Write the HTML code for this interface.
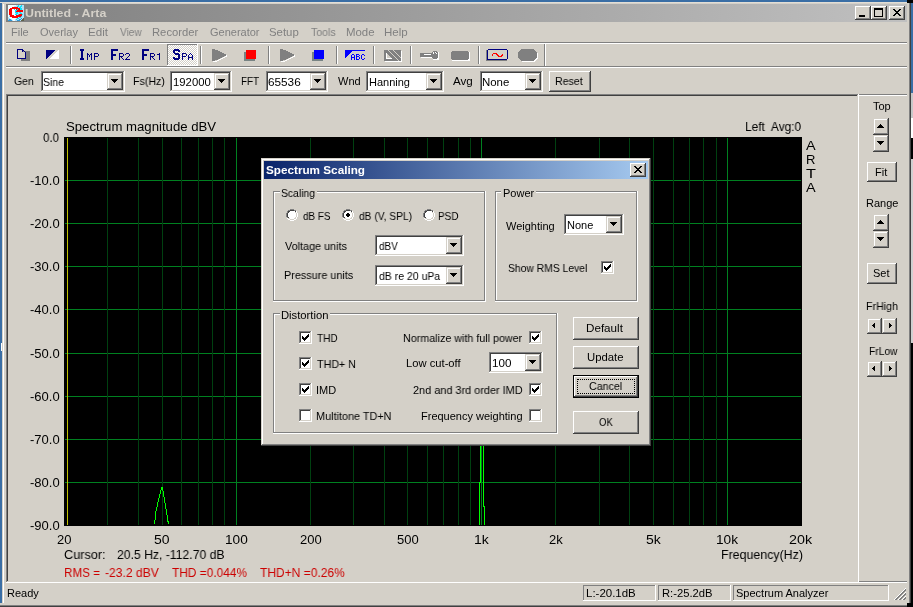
<!DOCTYPE html><html><head><meta charset="utf-8"><style>
html,body{margin:0;padding:0;width:913px;height:607px;overflow:hidden;background:#d4d0c8}
body>div,body>svg{position:absolute}
div{position:absolute}
.t{font-family:"Liberation Sans",sans-serif;font-size:11px;line-height:20px;white-space:pre;height:20px;will-change:transform}
</style></head><body>
<div style="left:0px;top:0px;width:913px;height:607px;background:#d4d0c8;"></div>
<div style="left:0px;top:0px;width:907px;height:2px;background:#3a6ea5;"></div>
<div style="left:907px;top:0px;width:6px;height:3px;background:#000;"></div>
<div style="left:0px;top:3px;width:2px;height:600px;background:#3a6ea5;"></div>
<div style="left:0px;top:2px;width:907px;height:1px;background:#e2ded6;"></div>
<div style="left:2px;top:3px;width:1px;height:600px;background:#d4d0c8;"></div>
<div style="left:1px;top:343px;width:1px;height:8px;background:#ffffff;"></div>
<div style="left:3px;top:3px;width:1px;height:600px;background:#ffffff;"></div>
<div style="left:3px;top:3px;width:905px;height:1px;background:#d4d0c8;"></div>
<div style="left:911px;top:3px;width:2px;height:90px;background:#3a6ea5;"></div>
<div style="left:911px;top:93px;width:2px;height:25px;background:#c8c8c8;"></div>
<div style="left:911px;top:118px;width:2px;height:20px;background:#ffffff;"></div>
<div style="left:911px;top:138px;width:2px;height:21px;background:#000;"></div>
<div style="left:911px;top:159px;width:2px;height:184px;background:#d0d0d0;"></div>
<div style="left:911px;top:343px;width:2px;height:264px;background:#000;"></div>
<div style="left:909px;top:3px;width:1px;height:602px;background:#808080;"></div>
<div style="left:910px;top:3px;width:1px;height:604px;background:#404040;"></div>
<div style="left:0px;top:605px;width:910px;height:1px;background:#808080;"></div>
<div style="left:0px;top:606px;width:911px;height:1px;background:#404040;"></div>
<div style="left:6px;top:4px;width:901px;height:18px;background:linear-gradient(to right,#808080,#c0c0c0);"></div>
<div class="t" style="left:24.88px;top:3px;font-size:11px;color:#d4d0c8;transform:scaleX(1.1250);transform-origin:0 0;font-weight:bold;">Untitled - Arta</div>
<div style="left:855px;top:6px;width:16px;height:14px;background:#404040;"></div>
<div style="left:855px;top:6px;width:15px;height:13px;background:#ffffff;"></div>
<div style="left:856px;top:7px;width:14px;height:12px;background:#808080;"></div>
<div style="left:856px;top:7px;width:13px;height:11px;background:#d4d0c8;"></div>
<div style="left:857px;top:8px;width:12px;height:10px;background:#d4d0c8;"></div>
<div style="left:871px;top:6px;width:16px;height:14px;background:#404040;"></div>
<div style="left:871px;top:6px;width:15px;height:13px;background:#ffffff;"></div>
<div style="left:872px;top:7px;width:14px;height:12px;background:#808080;"></div>
<div style="left:872px;top:7px;width:13px;height:11px;background:#d4d0c8;"></div>
<div style="left:873px;top:8px;width:12px;height:10px;background:#d4d0c8;"></div>
<div style="left:889px;top:6px;width:16px;height:14px;background:#404040;"></div>
<div style="left:889px;top:6px;width:15px;height:13px;background:#ffffff;"></div>
<div style="left:890px;top:7px;width:14px;height:12px;background:#808080;"></div>
<div style="left:890px;top:7px;width:13px;height:11px;background:#d4d0c8;"></div>
<div style="left:891px;top:8px;width:12px;height:10px;background:#d4d0c8;"></div>
<div style="left:859px;top:15px;width:6px;height:2px;background:#000;"></div>
<div style="left:874px;top:8px;width:9px;height:9px;background:#000;"></div>
<div style="left:875px;top:10px;width:7px;height:6px;background:#d4d0c8;"></div>
<svg style="position:absolute;left:893px;top:9px" width="9" height="8" shape-rendering="crispEdges"><path d="M0 0h2v1h-2zM6 0h2v1h-2zM1 1h2v1h-2zM5 1h2v1h-2zM2 2h4v1h-4zM3 3h2v1h-2zM2 4h4v1h-4zM1 5h2v1h-2zM5 5h2v1h-2zM0 6h2v1h-2zM6 6h2v1h-2z" fill="#000"/></svg>
<svg style="position:absolute;left:8px;top:5px" width="16" height="16" shape-rendering="crispEdges"><rect x="0" y="0" width="1" height="1" fill="#f4fcff"/><rect x="1" y="0" width="1" height="1" fill="#f4fcff"/><rect x="2" y="0" width="1" height="1" fill="#f4fcff"/><rect x="3" y="0" width="1" height="1" fill="#f4fcff"/><rect x="4" y="0" width="1" height="1" fill="#f4fcff"/><rect x="5" y="0" width="1" height="1" fill="#f4fcff"/><rect x="6" y="0" width="1" height="1" fill="#f4fcff"/><rect x="7" y="0" width="1" height="1" fill="#f4fcff"/><rect x="8" y="0" width="1" height="1" fill="#b0e0f8"/><rect x="9" y="0" width="1" height="1" fill="#b0e0f8"/><rect x="10" y="0" width="1" height="1" fill="#10e0f8"/><rect x="11" y="0" width="1" height="1" fill="#b0e0f8"/><rect x="12" y="0" width="1" height="1" fill="#b0e0f8"/><rect x="13" y="0" width="1" height="1" fill="#10e0f8"/><rect x="14" y="0" width="1" height="1" fill="#b0e0f8"/><rect x="15" y="0" width="1" height="1" fill="#b0e0f8"/><rect x="0" y="1" width="1" height="1" fill="#f4fcff"/><rect x="1" y="1" width="1" height="1" fill="#f4fcff"/><rect x="2" y="1" width="1" height="1" fill="#f4fcff"/><rect x="3" y="1" width="1" height="1" fill="#f4fcff"/><rect x="4" y="1" width="1" height="1" fill="#f4fcff"/><rect x="5" y="1" width="1" height="1" fill="#f4fcff"/><rect x="6" y="1" width="1" height="1" fill="#b0e0f8"/><rect x="7" y="1" width="1" height="1" fill="#b0e0f8"/><rect x="8" y="1" width="1" height="1" fill="#b0e0f8"/><rect x="9" y="1" width="1" height="1" fill="#10e0f8"/><rect x="10" y="1" width="1" height="1" fill="#10e0f8"/><rect x="11" y="1" width="1" height="1" fill="#b0e0f8"/><rect x="12" y="1" width="1" height="1" fill="#10e0f8"/><rect x="13" y="1" width="1" height="1" fill="#10e0f8"/><rect x="14" y="1" width="1" height="1" fill="#b0e0f8"/><rect x="15" y="1" width="1" height="1" fill="#b0e0f8"/><rect x="0" y="2" width="1" height="1" fill="#f4fcff"/><rect x="1" y="2" width="1" height="1" fill="#f4fcff"/><rect x="2" y="2" width="1" height="1" fill="#f4fcff"/><rect x="3" y="2" width="1" height="1" fill="#f4fcff"/><rect x="4" y="2" width="1" height="1" fill="#ff0000"/><rect x="5" y="2" width="1" height="1" fill="#ff0000"/><rect x="6" y="2" width="1" height="1" fill="#ff0000"/><rect x="7" y="2" width="1" height="1" fill="#ff0000"/><rect x="8" y="2" width="1" height="1" fill="#ff0000"/><rect x="9" y="2" width="1" height="1" fill="#ff0000"/><rect x="10" y="2" width="1" height="1" fill="#b0e0f8"/><rect x="11" y="2" width="1" height="1" fill="#10e0f8"/><rect x="12" y="2" width="1" height="1" fill="#10e0f8"/><rect x="13" y="2" width="1" height="1" fill="#b0e0f8"/><rect x="14" y="2" width="1" height="1" fill="#b0e0f8"/><rect x="15" y="2" width="1" height="1" fill="#b0e0f8"/><rect x="0" y="3" width="1" height="1" fill="#f4fcff"/><rect x="1" y="3" width="1" height="1" fill="#f4fcff"/><rect x="2" y="3" width="1" height="1" fill="#ff0000"/><rect x="3" y="3" width="1" height="1" fill="#ff0000"/><rect x="4" y="3" width="1" height="1" fill="#ff0000"/><rect x="5" y="3" width="1" height="1" fill="#ff0000"/><rect x="6" y="3" width="1" height="1" fill="#ff0000"/><rect x="7" y="3" width="1" height="1" fill="#ff0000"/><rect x="8" y="3" width="1" height="1" fill="#ff0000"/><rect x="9" y="3" width="1" height="1" fill="#ff0000"/><rect x="10" y="3" width="1" height="1" fill="#ff0000"/><rect x="11" y="3" width="1" height="1" fill="#ff0000"/><rect x="12" y="3" width="1" height="1" fill="#10e0f8"/><rect x="13" y="3" width="1" height="1" fill="#10e0f8"/><rect x="14" y="3" width="1" height="1" fill="#b0e0f8"/><rect x="15" y="3" width="1" height="1" fill="#b0e0f8"/><rect x="0" y="4" width="1" height="1" fill="#f4fcff"/><rect x="1" y="4" width="1" height="1" fill="#ff0000"/><rect x="2" y="4" width="1" height="1" fill="#ff0000"/><rect x="3" y="4" width="1" height="1" fill="#ff0000"/><rect x="4" y="4" width="1" height="1" fill="#f4fcff"/><rect x="5" y="4" width="1" height="1" fill="#f4fcff"/><rect x="6" y="4" width="1" height="1" fill="#10e0f8"/><rect x="7" y="4" width="1" height="1" fill="#f4fcff"/><rect x="8" y="4" width="1" height="1" fill="#ff0000"/><rect x="9" y="4" width="1" height="1" fill="#10e0f8"/><rect x="10" y="4" width="1" height="1" fill="#ff0000"/><rect x="11" y="4" width="1" height="1" fill="#ff0000"/><rect x="12" y="4" width="1" height="1" fill="#10e0f8"/><rect x="13" y="4" width="1" height="1" fill="#10e0f8"/><rect x="14" y="4" width="1" height="1" fill="#b0e0f8"/><rect x="15" y="4" width="1" height="1" fill="#b0e0f8"/><rect x="0" y="5" width="1" height="1" fill="#f4fcff"/><rect x="1" y="5" width="1" height="1" fill="#ff0000"/><rect x="2" y="5" width="1" height="1" fill="#ff0000"/><rect x="3" y="5" width="1" height="1" fill="#ff0000"/><rect x="4" y="5" width="1" height="1" fill="#f4fcff"/><rect x="5" y="5" width="1" height="1" fill="#f4fcff"/><rect x="6" y="5" width="1" height="1" fill="#f4fcff"/><rect x="7" y="5" width="1" height="1" fill="#10e0f8"/><rect x="8" y="5" width="1" height="1" fill="#10e0f8"/><rect x="9" y="5" width="1" height="1" fill="#ff0000"/><rect x="10" y="5" width="1" height="1" fill="#ff0000"/><rect x="11" y="5" width="1" height="1" fill="#ff0000"/><rect x="12" y="5" width="1" height="1" fill="#ff0000"/><rect x="13" y="5" width="1" height="1" fill="#ff0000"/><rect x="14" y="5" width="1" height="1" fill="#ff0000"/><rect x="15" y="5" width="1" height="1" fill="#b0e0f8"/><rect x="0" y="6" width="1" height="1" fill="#f4fcff"/><rect x="1" y="6" width="1" height="1" fill="#ff0000"/><rect x="2" y="6" width="1" height="1" fill="#ff0000"/><rect x="3" y="6" width="1" height="1" fill="#ff0000"/><rect x="4" y="6" width="1" height="1" fill="#f4fcff"/><rect x="5" y="6" width="1" height="1" fill="#f4fcff"/><rect x="6" y="6" width="1" height="1" fill="#f4fcff"/><rect x="7" y="6" width="1" height="1" fill="#10e0f8"/><rect x="8" y="6" width="1" height="1" fill="#ff0000"/><rect x="9" y="6" width="1" height="1" fill="#ff0000"/><rect x="10" y="6" width="1" height="1" fill="#ff0000"/><rect x="11" y="6" width="1" height="1" fill="#ff0000"/><rect x="12" y="6" width="1" height="1" fill="#ff0000"/><rect x="13" y="6" width="1" height="1" fill="#ff0000"/><rect x="14" y="6" width="1" height="1" fill="#ff0000"/><rect x="15" y="6" width="1" height="1" fill="#b0e0f8"/><rect x="0" y="7" width="1" height="1" fill="#f4fcff"/><rect x="1" y="7" width="1" height="1" fill="#ff0000"/><rect x="2" y="7" width="1" height="1" fill="#ff0000"/><rect x="3" y="7" width="1" height="1" fill="#ff0000"/><rect x="4" y="7" width="1" height="1" fill="#f4fcff"/><rect x="5" y="7" width="1" height="1" fill="#f4fcff"/><rect x="6" y="7" width="1" height="1" fill="#f4fcff"/><rect x="7" y="7" width="1" height="1" fill="#10e0f8"/><rect x="8" y="7" width="1" height="1" fill="#10e0f8"/><rect x="9" y="7" width="1" height="1" fill="#10e0f8"/><rect x="10" y="7" width="1" height="1" fill="#b0e0f8"/><rect x="11" y="7" width="1" height="1" fill="#10e0f8"/><rect x="12" y="7" width="1" height="1" fill="#10e0f8"/><rect x="13" y="7" width="1" height="1" fill="#b0e0f8"/><rect x="14" y="7" width="1" height="1" fill="#b0e0f8"/><rect x="15" y="7" width="1" height="1" fill="#b0e0f8"/><rect x="0" y="8" width="1" height="1" fill="#f4fcff"/><rect x="1" y="8" width="1" height="1" fill="#ff0000"/><rect x="2" y="8" width="1" height="1" fill="#ff0000"/><rect x="3" y="8" width="1" height="1" fill="#ff0000"/><rect x="4" y="8" width="1" height="1" fill="#f4fcff"/><rect x="5" y="8" width="1" height="1" fill="#f4fcff"/><rect x="6" y="8" width="1" height="1" fill="#f4fcff"/><rect x="7" y="8" width="1" height="1" fill="#b0e0f8"/><rect x="8" y="8" width="1" height="1" fill="#10e0f8"/><rect x="9" y="8" width="1" height="1" fill="#10e0f8"/><rect x="10" y="8" width="1" height="1" fill="#b0e0f8"/><rect x="11" y="8" width="1" height="1" fill="#b0e0f8"/><rect x="12" y="8" width="1" height="1" fill="#10e0f8"/><rect x="13" y="8" width="1" height="1" fill="#10e0f8"/><rect x="14" y="8" width="1" height="1" fill="#b0e0f8"/><rect x="15" y="8" width="1" height="1" fill="#b0e0f8"/><rect x="0" y="9" width="1" height="1" fill="#f4fcff"/><rect x="1" y="9" width="1" height="1" fill="#ff0000"/><rect x="2" y="9" width="1" height="1" fill="#ff0000"/><rect x="3" y="9" width="1" height="1" fill="#ff0000"/><rect x="4" y="9" width="1" height="1" fill="#f4fcff"/><rect x="5" y="9" width="1" height="1" fill="#f4fcff"/><rect x="6" y="9" width="1" height="1" fill="#f4fcff"/><rect x="7" y="9" width="1" height="1" fill="#10e0f8"/><rect x="8" y="9" width="1" height="1" fill="#10e0f8"/><rect x="9" y="9" width="1" height="1" fill="#b0e0f8"/><rect x="10" y="9" width="1" height="1" fill="#10e0f8"/><rect x="11" y="9" width="1" height="1" fill="#ff0000"/><rect x="12" y="9" width="1" height="1" fill="#ff0000"/><rect x="13" y="9" width="1" height="1" fill="#ff0000"/><rect x="14" y="9" width="1" height="1" fill="#10e0f8"/><rect x="15" y="9" width="1" height="1" fill="#b0e0f8"/><rect x="0" y="10" width="1" height="1" fill="#f4fcff"/><rect x="1" y="10" width="1" height="1" fill="#b0e0f8"/><rect x="2" y="10" width="1" height="1" fill="#ff0000"/><rect x="3" y="10" width="1" height="1" fill="#ff0000"/><rect x="4" y="10" width="1" height="1" fill="#ff0000"/><rect x="5" y="10" width="1" height="1" fill="#ff0000"/><rect x="6" y="10" width="1" height="1" fill="#f4fcff"/><rect x="7" y="10" width="1" height="1" fill="#f4fcff"/><rect x="8" y="10" width="1" height="1" fill="#ff0000"/><rect x="9" y="10" width="1" height="1" fill="#ff0000"/><rect x="10" y="10" width="1" height="1" fill="#ff0000"/><rect x="11" y="10" width="1" height="1" fill="#ff0000"/><rect x="12" y="10" width="1" height="1" fill="#ff0000"/><rect x="13" y="10" width="1" height="1" fill="#ff0000"/><rect x="14" y="10" width="1" height="1" fill="#b0e0f8"/><rect x="15" y="10" width="1" height="1" fill="#b0e0f8"/><rect x="0" y="11" width="1" height="1" fill="#f4fcff"/><rect x="1" y="11" width="1" height="1" fill="#b0e0f8"/><rect x="2" y="11" width="1" height="1" fill="#ff0000"/><rect x="3" y="11" width="1" height="1" fill="#ff0000"/><rect x="4" y="11" width="1" height="1" fill="#ff0000"/><rect x="5" y="11" width="1" height="1" fill="#ff0000"/><rect x="6" y="11" width="1" height="1" fill="#ff0000"/><rect x="7" y="11" width="1" height="1" fill="#ff0000"/><rect x="8" y="11" width="1" height="1" fill="#ff0000"/><rect x="9" y="11" width="1" height="1" fill="#ff0000"/><rect x="10" y="11" width="1" height="1" fill="#ff0000"/><rect x="11" y="11" width="1" height="1" fill="#ff0000"/><rect x="12" y="11" width="1" height="1" fill="#ff0000"/><rect x="13" y="11" width="1" height="1" fill="#10e0f8"/><rect x="14" y="11" width="1" height="1" fill="#b0e0f8"/><rect x="15" y="11" width="1" height="1" fill="#b0e0f8"/><rect x="0" y="12" width="1" height="1" fill="#b0e0f8"/><rect x="1" y="12" width="1" height="1" fill="#f4fcff"/><rect x="2" y="12" width="1" height="1" fill="#f4fcff"/><rect x="3" y="12" width="1" height="1" fill="#f4fcff"/><rect x="4" y="12" width="1" height="1" fill="#ff0000"/><rect x="5" y="12" width="1" height="1" fill="#ff0000"/><rect x="6" y="12" width="1" height="1" fill="#ff0000"/><rect x="7" y="12" width="1" height="1" fill="#ff0000"/><rect x="8" y="12" width="1" height="1" fill="#ff0000"/><rect x="9" y="12" width="1" height="1" fill="#ff0000"/><rect x="10" y="12" width="1" height="1" fill="#b0e0f8"/><rect x="11" y="12" width="1" height="1" fill="#10e0f8"/><rect x="12" y="12" width="1" height="1" fill="#10e0f8"/><rect x="13" y="12" width="1" height="1" fill="#b0e0f8"/><rect x="14" y="12" width="1" height="1" fill="#b0e0f8"/><rect x="15" y="12" width="1" height="1" fill="#b0e0f8"/><rect x="0" y="13" width="1" height="1" fill="#b0e0f8"/><rect x="1" y="13" width="1" height="1" fill="#b0e0f8"/><rect x="2" y="13" width="1" height="1" fill="#f4fcff"/><rect x="3" y="13" width="1" height="1" fill="#f4fcff"/><rect x="4" y="13" width="1" height="1" fill="#f4fcff"/><rect x="5" y="13" width="1" height="1" fill="#f4fcff"/><rect x="6" y="13" width="1" height="1" fill="#f4fcff"/><rect x="7" y="13" width="1" height="1" fill="#f4fcff"/><rect x="8" y="13" width="1" height="1" fill="#b0e0f8"/><rect x="9" y="13" width="1" height="1" fill="#10e0f8"/><rect x="10" y="13" width="1" height="1" fill="#10e0f8"/><rect x="11" y="13" width="1" height="1" fill="#b0e0f8"/><rect x="12" y="13" width="1" height="1" fill="#b0e0f8"/><rect x="13" y="13" width="1" height="1" fill="#3098d8"/><rect x="14" y="13" width="1" height="1" fill="#b0e0f8"/><rect x="15" y="13" width="1" height="1" fill="#606048"/><rect x="0" y="14" width="1" height="1" fill="#b0e0f8"/><rect x="1" y="14" width="1" height="1" fill="#3098d8"/><rect x="2" y="14" width="1" height="1" fill="#3098d8"/><rect x="3" y="14" width="1" height="1" fill="#b0e0f8"/><rect x="4" y="14" width="1" height="1" fill="#f4fcff"/><rect x="5" y="14" width="1" height="1" fill="#f4fcff"/><rect x="6" y="14" width="1" height="1" fill="#f4fcff"/><rect x="7" y="14" width="1" height="1" fill="#b0e0f8"/><rect x="8" y="14" width="1" height="1" fill="#10e0f8"/><rect x="9" y="14" width="1" height="1" fill="#b0e0f8"/><rect x="10" y="14" width="1" height="1" fill="#b0e0f8"/><rect x="11" y="14" width="1" height="1" fill="#3098d8"/><rect x="12" y="14" width="1" height="1" fill="#3098d8"/><rect x="13" y="14" width="1" height="1" fill="#b0e0f8"/><rect x="14" y="14" width="1" height="1" fill="#606048"/><rect x="15" y="14" width="1" height="1" fill="#606048"/><rect x="0" y="15" width="1" height="1" fill="#3098d8"/><rect x="1" y="15" width="1" height="1" fill="#3098d8"/><rect x="2" y="15" width="1" height="1" fill="#3098d8"/><rect x="3" y="15" width="1" height="1" fill="#3098d8"/><rect x="4" y="15" width="1" height="1" fill="#b0e0f8"/><rect x="5" y="15" width="1" height="1" fill="#f4fcff"/><rect x="6" y="15" width="1" height="1" fill="#f4fcff"/><rect x="7" y="15" width="1" height="1" fill="#b0e0f8"/><rect x="8" y="15" width="1" height="1" fill="#b0e0f8"/><rect x="9" y="15" width="1" height="1" fill="#3098d8"/><rect x="10" y="15" width="1" height="1" fill="#3098d8"/><rect x="11" y="15" width="1" height="1" fill="#3098d8"/><rect x="12" y="15" width="1" height="1" fill="#b0e0f8"/><rect x="13" y="15" width="1" height="1" fill="#606048"/><rect x="14" y="15" width="1" height="1" fill="#606048"/><rect x="15" y="15" width="1" height="1" fill="#606048"/></svg>
<div class="t" style="left:11.00px;top:22px;font-size:11px;color:#808080;transform:scaleX(1.0000);transform-origin:0 0;">File</div>
<div class="t" style="left:40.00px;top:22px;font-size:11px;color:#808080;transform:scaleX(1.0000);transform-origin:0 0;">Overlay</div>
<div class="t" style="left:87.94px;top:22px;font-size:11px;color:#808080;transform:scaleX(1.0556);transform-origin:0 0;">Edit</div>
<div class="t" style="left:120.00px;top:22px;font-size:11px;color:#808080;transform:scaleX(0.9167);transform-origin:0 0;">View</div>
<div class="t" style="left:151.98px;top:22px;font-size:11px;color:#808080;transform:scaleX(1.0227);transform-origin:0 0;">Recorder</div>
<div class="t" style="left:210.00px;top:22px;font-size:11px;color:#808080;transform:scaleX(1.0000);transform-origin:0 0;">Generator</div>
<div class="t" style="left:268.96px;top:22px;font-size:11px;color:#808080;transform:scaleX(1.0357);transform-origin:0 0;">Setup</div>
<div class="t" style="left:311.00px;top:22px;font-size:11px;color:#808080;transform:scaleX(0.9615);transform-origin:0 0;">Tools</div>
<div class="t" style="left:345.96px;top:22px;font-size:11px;color:#808080;transform:scaleX(1.0385);transform-origin:0 0;">Mode</div>
<div class="t" style="left:383.95px;top:22px;font-size:11px;color:#808080;transform:scaleX(1.0476);transform-origin:0 0;">Help</div>
<div style="left:6px;top:42px;width:901px;height:1px;background:#808080;"></div>
<div style="left:6px;top:43px;width:901px;height:1px;background:#ffffff;"></div>
<div style="left:6px;top:66px;width:901px;height:1px;background:#808080;"></div>
<div style="left:6px;top:67px;width:901px;height:1px;background:#ffffff;"></div>
<div style="left:70px;top:46px;width:1px;height:18px;background:#808080;"></div>
<div style="left:71px;top:46px;width:1px;height:18px;background:#ffffff;"></div>
<div style="left:200px;top:46px;width:1px;height:18px;background:#808080;"></div>
<div style="left:201px;top:46px;width:1px;height:18px;background:#ffffff;"></div>
<div style="left:268px;top:46px;width:1px;height:18px;background:#808080;"></div>
<div style="left:269px;top:46px;width:1px;height:18px;background:#ffffff;"></div>
<div style="left:336px;top:46px;width:1px;height:18px;background:#808080;"></div>
<div style="left:337px;top:46px;width:1px;height:18px;background:#ffffff;"></div>
<div style="left:373px;top:46px;width:1px;height:18px;background:#808080;"></div>
<div style="left:374px;top:46px;width:1px;height:18px;background:#ffffff;"></div>
<div style="left:410px;top:46px;width:1px;height:18px;background:#808080;"></div>
<div style="left:411px;top:46px;width:1px;height:18px;background:#ffffff;"></div>
<div style="left:478px;top:46px;width:1px;height:18px;background:#808080;"></div>
<div style="left:479px;top:46px;width:1px;height:18px;background:#ffffff;"></div>
<div style="left:544px;top:44px;width:1px;height:22px;background:#808080;"></div>
<div style="left:545px;top:44px;width:1px;height:22px;background:#ffffff;"></div>
<svg style="position:absolute;left:0;top:0" width="913" height="100" shape-rendering="crispEdges"><rect x="21" y="51" width="9" height="10" fill="#808080"/><rect x="17" y="49" width="6" height="1" fill="#000080"/><rect x="17" y="50" width="1" height="1" fill="#000080"/><rect x="22" y="50" width="2" height="1" fill="#000080"/><rect x="17" y="51" width="1" height="1" fill="#000080"/><rect x="22" y="51" width="1" height="1" fill="#000080"/><rect x="24" y="51" width="1" height="1" fill="#000080"/><rect x="17" y="52" width="1" height="1" fill="#000080"/><rect x="23" y="52" width="3" height="1" fill="#000080"/><rect x="17" y="53" width="1" height="1" fill="#000080"/><rect x="25" y="53" width="1" height="1" fill="#000080"/><rect x="17" y="54" width="1" height="1" fill="#000080"/><rect x="25" y="54" width="1" height="1" fill="#000080"/><rect x="17" y="55" width="1" height="1" fill="#000080"/><rect x="25" y="55" width="1" height="1" fill="#000080"/><rect x="17" y="56" width="1" height="1" fill="#000080"/><rect x="25" y="56" width="1" height="1" fill="#000080"/><rect x="17" y="57" width="1" height="1" fill="#000080"/><rect x="25" y="57" width="1" height="1" fill="#000080"/><rect x="17" y="58" width="9" height="1" fill="#000080"/><rect x="18" y="50" width="4" height="8" fill="#d4d0c8"/><rect x="22" y="52" width="3" height="6" fill="#d4d0c8"/><rect x="46" y="50" width="9" height="1" fill="#000080"/><rect x="58" y="50" width="1" height="1" fill="#ffffff"/><rect x="46" y="51" width="8" height="1" fill="#000080"/><rect x="57" y="51" width="2" height="1" fill="#ffffff"/><rect x="46" y="52" width="7" height="1" fill="#000080"/><rect x="56" y="52" width="3" height="1" fill="#ffffff"/><rect x="46" y="53" width="6" height="1" fill="#000080"/><rect x="55" y="53" width="4" height="1" fill="#ffffff"/><rect x="46" y="54" width="5" height="1" fill="#000080"/><rect x="54" y="54" width="5" height="1" fill="#ffffff"/><rect x="46" y="55" width="4" height="1" fill="#000080"/><rect x="53" y="55" width="6" height="1" fill="#ffffff"/><rect x="46" y="56" width="3" height="1" fill="#000080"/><rect x="52" y="56" width="7" height="1" fill="#ffffff"/><rect x="46" y="57" width="2" height="1" fill="#000080"/><rect x="51" y="57" width="8" height="1" fill="#ffffff"/><rect x="46" y="58" width="1" height="1" fill="#000080"/><rect x="50" y="58" width="9" height="1" fill="#ffffff"/><rect x="167" y="44" width="31" height="22" fill="#ffffff"/><rect x="167" y="44" width="30" height="21" fill="#808080"/><pattern id="dith" width="2" height="2" patternUnits="userSpaceOnUse"><rect width="2" height="2" fill="#d4d0c8"/><rect width="1" height="1" fill="#fff"/><rect x="1" y="1" width="1" height="1" fill="#fff"/></pattern><rect x="168" y="45" width="29" height="20" fill="url(#dith)"/><rect x="80" y="49" width="4" height="1" fill="#000080"/><rect x="80" y="50" width="4" height="1" fill="#000080"/><rect x="81" y="51" width="2" height="1" fill="#000080"/><rect x="81" y="52" width="2" height="1" fill="#000080"/><rect x="81" y="53" width="2" height="1" fill="#000080"/><rect x="81" y="54" width="2" height="1" fill="#000080"/><rect x="81" y="55" width="2" height="1" fill="#000080"/><rect x="81" y="56" width="2" height="1" fill="#000080"/><rect x="81" y="57" width="2" height="1" fill="#000080"/><rect x="80" y="58" width="4" height="1" fill="#000080"/><rect x="80" y="59" width="4" height="1" fill="#000080"/><rect x="87" y="53" width="1" height="1" fill="#000080"/><rect x="91" y="53" width="1" height="1" fill="#000080"/><rect x="87" y="54" width="2" height="1" fill="#000080"/><rect x="90" y="54" width="2" height="1" fill="#000080"/><rect x="87" y="55" width="1" height="1" fill="#000080"/><rect x="89" y="55" width="1" height="1" fill="#000080"/><rect x="91" y="55" width="1" height="1" fill="#000080"/><rect x="87" y="56" width="1" height="1" fill="#000080"/><rect x="89" y="56" width="1" height="1" fill="#000080"/><rect x="91" y="56" width="1" height="1" fill="#000080"/><rect x="87" y="57" width="1" height="1" fill="#000080"/><rect x="91" y="57" width="1" height="1" fill="#000080"/><rect x="87" y="58" width="1" height="1" fill="#000080"/><rect x="91" y="58" width="1" height="1" fill="#000080"/><rect x="87" y="59" width="1" height="1" fill="#000080"/><rect x="91" y="59" width="1" height="1" fill="#000080"/><rect x="94" y="53" width="4" height="1" fill="#000080"/><rect x="94" y="54" width="1" height="1" fill="#000080"/><rect x="98" y="54" width="1" height="1" fill="#000080"/><rect x="94" y="55" width="1" height="1" fill="#000080"/><rect x="98" y="55" width="1" height="1" fill="#000080"/><rect x="94" y="56" width="4" height="1" fill="#000080"/><rect x="94" y="57" width="1" height="1" fill="#000080"/><rect x="94" y="58" width="1" height="1" fill="#000080"/><rect x="94" y="59" width="1" height="1" fill="#000080"/><rect x="111" y="49" width="7" height="1" fill="#000080"/><rect x="111" y="50" width="7" height="1" fill="#000080"/><rect x="111" y="51" width="2" height="1" fill="#000080"/><rect x="111" y="52" width="2" height="1" fill="#000080"/><rect x="111" y="53" width="2" height="1" fill="#000080"/><rect x="111" y="54" width="5" height="1" fill="#000080"/><rect x="111" y="55" width="5" height="1" fill="#000080"/><rect x="111" y="56" width="2" height="1" fill="#000080"/><rect x="111" y="57" width="2" height="1" fill="#000080"/><rect x="111" y="58" width="2" height="1" fill="#000080"/><rect x="111" y="59" width="2" height="1" fill="#000080"/><rect x="119" y="53" width="4" height="1" fill="#000080"/><rect x="119" y="54" width="1" height="1" fill="#000080"/><rect x="123" y="54" width="1" height="1" fill="#000080"/><rect x="119" y="55" width="1" height="1" fill="#000080"/><rect x="123" y="55" width="1" height="1" fill="#000080"/><rect x="119" y="56" width="4" height="1" fill="#000080"/><rect x="119" y="57" width="1" height="1" fill="#000080"/><rect x="121" y="57" width="1" height="1" fill="#000080"/><rect x="119" y="58" width="1" height="1" fill="#000080"/><rect x="122" y="58" width="1" height="1" fill="#000080"/><rect x="119" y="59" width="1" height="1" fill="#000080"/><rect x="123" y="59" width="1" height="1" fill="#000080"/><rect x="126" y="53" width="3" height="1" fill="#000080"/><rect x="125" y="54" width="1" height="1" fill="#000080"/><rect x="129" y="54" width="1" height="1" fill="#000080"/><rect x="129" y="55" width="1" height="1" fill="#000080"/><rect x="128" y="56" width="1" height="1" fill="#000080"/><rect x="127" y="57" width="1" height="1" fill="#000080"/><rect x="126" y="58" width="1" height="1" fill="#000080"/><rect x="125" y="59" width="5" height="1" fill="#000080"/><rect x="142" y="49" width="7" height="1" fill="#000080"/><rect x="142" y="50" width="7" height="1" fill="#000080"/><rect x="142" y="51" width="2" height="1" fill="#000080"/><rect x="142" y="52" width="2" height="1" fill="#000080"/><rect x="142" y="53" width="2" height="1" fill="#000080"/><rect x="142" y="54" width="5" height="1" fill="#000080"/><rect x="142" y="55" width="5" height="1" fill="#000080"/><rect x="142" y="56" width="2" height="1" fill="#000080"/><rect x="142" y="57" width="2" height="1" fill="#000080"/><rect x="142" y="58" width="2" height="1" fill="#000080"/><rect x="142" y="59" width="2" height="1" fill="#000080"/><rect x="150" y="53" width="4" height="1" fill="#000080"/><rect x="150" y="54" width="1" height="1" fill="#000080"/><rect x="154" y="54" width="1" height="1" fill="#000080"/><rect x="150" y="55" width="1" height="1" fill="#000080"/><rect x="154" y="55" width="1" height="1" fill="#000080"/><rect x="150" y="56" width="4" height="1" fill="#000080"/><rect x="150" y="57" width="1" height="1" fill="#000080"/><rect x="152" y="57" width="1" height="1" fill="#000080"/><rect x="150" y="58" width="1" height="1" fill="#000080"/><rect x="153" y="58" width="1" height="1" fill="#000080"/><rect x="150" y="59" width="1" height="1" fill="#000080"/><rect x="154" y="59" width="1" height="1" fill="#000080"/><rect x="159" y="53" width="1" height="1" fill="#000080"/><rect x="157" y="54" width="3" height="1" fill="#000080"/><rect x="159" y="55" width="1" height="1" fill="#000080"/><rect x="159" y="56" width="1" height="1" fill="#000080"/><rect x="159" y="57" width="1" height="1" fill="#000080"/><rect x="159" y="58" width="1" height="1" fill="#000080"/><rect x="159" y="59" width="1" height="1" fill="#000080"/><rect x="174" y="49" width="5" height="1" fill="#000080"/><rect x="173" y="50" width="7" height="1" fill="#000080"/><rect x="173" y="51" width="2" height="1" fill="#000080"/><rect x="178" y="51" width="2" height="1" fill="#000080"/><rect x="173" y="52" width="2" height="1" fill="#000080"/><rect x="174" y="53" width="5" height="1" fill="#000080"/><rect x="175" y="54" width="5" height="1" fill="#000080"/><rect x="178" y="55" width="2" height="1" fill="#000080"/><rect x="178" y="56" width="2" height="1" fill="#000080"/><rect x="173" y="57" width="2" height="1" fill="#000080"/><rect x="178" y="57" width="2" height="1" fill="#000080"/><rect x="173" y="58" width="7" height="1" fill="#000080"/><rect x="174" y="59" width="5" height="1" fill="#000080"/><rect x="182" y="53" width="4" height="1" fill="#000080"/><rect x="182" y="54" width="1" height="1" fill="#000080"/><rect x="186" y="54" width="1" height="1" fill="#000080"/><rect x="182" y="55" width="1" height="1" fill="#000080"/><rect x="186" y="55" width="1" height="1" fill="#000080"/><rect x="182" y="56" width="4" height="1" fill="#000080"/><rect x="182" y="57" width="1" height="1" fill="#000080"/><rect x="182" y="58" width="1" height="1" fill="#000080"/><rect x="182" y="59" width="1" height="1" fill="#000080"/><rect x="190" y="53" width="1" height="1" fill="#000080"/><rect x="189" y="54" width="1" height="1" fill="#000080"/><rect x="191" y="54" width="1" height="1" fill="#000080"/><rect x="188" y="55" width="1" height="1" fill="#000080"/><rect x="192" y="55" width="1" height="1" fill="#000080"/><rect x="188" y="56" width="1" height="1" fill="#000080"/><rect x="192" y="56" width="1" height="1" fill="#000080"/><rect x="188" y="57" width="5" height="1" fill="#000080"/><rect x="188" y="58" width="1" height="1" fill="#000080"/><rect x="192" y="58" width="1" height="1" fill="#000080"/><rect x="188" y="59" width="1" height="1" fill="#000080"/><rect x="192" y="59" width="1" height="1" fill="#000080"/><rect x="225" y="56" width="2" height="1" fill="#ffffff"/><rect x="223" y="57" width="2" height="1" fill="#ffffff"/><rect x="221" y="58" width="2" height="1" fill="#ffffff"/><rect x="219" y="59" width="2" height="1" fill="#ffffff"/><rect x="217" y="60" width="2" height="1" fill="#ffffff"/><rect x="213" y="61" width="4" height="1" fill="#ffffff"/><rect x="226" y="55" width="1" height="1" fill="#ffffff"/><rect x="212" y="49" width="3" height="1" fill="#808080"/><rect x="212" y="50" width="6" height="1" fill="#808080"/><rect x="212" y="51" width="8" height="1" fill="#808080"/><rect x="212" y="52" width="10" height="1" fill="#808080"/><rect x="212" y="53" width="12" height="1" fill="#808080"/><rect x="212" y="54" width="14" height="1" fill="#808080"/><rect x="212" y="55" width="14" height="1" fill="#808080"/><rect x="212" y="56" width="12" height="1" fill="#808080"/><rect x="212" y="57" width="10" height="1" fill="#808080"/><rect x="212" y="58" width="8" height="1" fill="#808080"/><rect x="212" y="59" width="6" height="1" fill="#808080"/><rect x="212" y="60" width="3" height="1" fill="#808080"/><rect x="293" y="56" width="2" height="1" fill="#ffffff"/><rect x="291" y="57" width="2" height="1" fill="#ffffff"/><rect x="289" y="58" width="2" height="1" fill="#ffffff"/><rect x="287" y="59" width="2" height="1" fill="#ffffff"/><rect x="285" y="60" width="2" height="1" fill="#ffffff"/><rect x="281" y="61" width="4" height="1" fill="#ffffff"/><rect x="294" y="55" width="1" height="1" fill="#ffffff"/><rect x="280" y="49" width="3" height="1" fill="#808080"/><rect x="280" y="50" width="6" height="1" fill="#808080"/><rect x="280" y="51" width="8" height="1" fill="#808080"/><rect x="280" y="52" width="10" height="1" fill="#808080"/><rect x="280" y="53" width="12" height="1" fill="#808080"/><rect x="280" y="54" width="14" height="1" fill="#808080"/><rect x="280" y="55" width="14" height="1" fill="#808080"/><rect x="280" y="56" width="12" height="1" fill="#808080"/><rect x="280" y="57" width="10" height="1" fill="#808080"/><rect x="280" y="58" width="8" height="1" fill="#808080"/><rect x="280" y="59" width="6" height="1" fill="#808080"/><rect x="280" y="60" width="3" height="1" fill="#808080"/><rect x="244" y="52" width="11" height="9" fill="#788484"/><rect x="246" y="50" width="10" height="9" fill="#ff0000"/><rect x="312" y="52" width="11" height="9" fill="#788484"/><rect x="314" y="50" width="10" height="9" fill="#0000ff"/><rect x="345" y="50" width="20" height="1" fill="#0000ff"/><rect x="345" y="50" width="8" height="1" fill="#0000ff"/><rect x="345" y="51" width="7" height="1" fill="#0000ff"/><rect x="345" y="52" width="6" height="1" fill="#0000ff"/><rect x="345" y="53" width="5" height="1" fill="#0000ff"/><rect x="345" y="54" width="4" height="1" fill="#0000ff"/><rect x="345" y="55" width="3" height="1" fill="#0000ff"/><rect x="345" y="56" width="2" height="1" fill="#0000ff"/><rect x="345" y="57" width="1" height="1" fill="#0000ff"/><rect x="352" y="54" width="2" height="1" fill="#0000ff"/><rect x="356" y="54" width="3" height="1" fill="#0000ff"/><rect x="362" y="54" width="2" height="1" fill="#0000ff"/><rect x="351" y="55" width="1" height="1" fill="#0000ff"/><rect x="354" y="55" width="1" height="1" fill="#0000ff"/><rect x="356" y="55" width="1" height="1" fill="#0000ff"/><rect x="359" y="55" width="1" height="1" fill="#0000ff"/><rect x="361" y="55" width="1" height="1" fill="#0000ff"/><rect x="364" y="55" width="1" height="1" fill="#0000ff"/><rect x="351" y="56" width="1" height="1" fill="#0000ff"/><rect x="354" y="56" width="1" height="1" fill="#0000ff"/><rect x="356" y="56" width="3" height="1" fill="#0000ff"/><rect x="361" y="56" width="1" height="1" fill="#0000ff"/><rect x="351" y="57" width="4" height="1" fill="#0000ff"/><rect x="356" y="57" width="1" height="1" fill="#0000ff"/><rect x="359" y="57" width="1" height="1" fill="#0000ff"/><rect x="361" y="57" width="1" height="1" fill="#0000ff"/><rect x="351" y="58" width="1" height="1" fill="#0000ff"/><rect x="354" y="58" width="1" height="1" fill="#0000ff"/><rect x="356" y="58" width="1" height="1" fill="#0000ff"/><rect x="359" y="58" width="1" height="1" fill="#0000ff"/><rect x="361" y="58" width="1" height="1" fill="#0000ff"/><rect x="364" y="58" width="1" height="1" fill="#0000ff"/><rect x="351" y="59" width="1" height="1" fill="#0000ff"/><rect x="354" y="59" width="1" height="1" fill="#0000ff"/><rect x="356" y="59" width="3" height="1" fill="#0000ff"/><rect x="362" y="59" width="2" height="1" fill="#0000ff"/><rect x="401" y="51" width="1" height="10" fill="#ffffff"/><rect x="385" y="61" width="17" height="1" fill="#ffffff"/><rect x="384" y="50" width="4" height="1" fill="#808080"/><rect x="389" y="50" width="4" height="1" fill="#808080"/><rect x="394" y="50" width="7" height="1" fill="#808080"/><rect x="384" y="51" width="5" height="1" fill="#808080"/><rect x="390" y="51" width="4" height="1" fill="#808080"/><rect x="395" y="51" width="6" height="1" fill="#808080"/><rect x="384" y="52" width="6" height="1" fill="#808080"/><rect x="391" y="52" width="4" height="1" fill="#808080"/><rect x="396" y="52" width="5" height="1" fill="#808080"/><rect x="384" y="53" width="2" height="1" fill="#808080"/><rect x="387" y="53" width="4" height="1" fill="#808080"/><rect x="392" y="53" width="4" height="1" fill="#808080"/><rect x="397" y="53" width="4" height="1" fill="#808080"/><rect x="384" y="54" width="2" height="1" fill="#808080"/><rect x="388" y="54" width="4" height="1" fill="#808080"/><rect x="393" y="54" width="4" height="1" fill="#808080"/><rect x="398" y="54" width="3" height="1" fill="#808080"/><rect x="384" y="55" width="2" height="1" fill="#808080"/><rect x="389" y="55" width="4" height="1" fill="#808080"/><rect x="394" y="55" width="4" height="1" fill="#808080"/><rect x="399" y="55" width="2" height="1" fill="#808080"/><rect x="384" y="56" width="2" height="1" fill="#808080"/><rect x="390" y="56" width="4" height="1" fill="#808080"/><rect x="395" y="56" width="4" height="1" fill="#808080"/><rect x="400" y="56" width="1" height="1" fill="#808080"/><rect x="384" y="57" width="2" height="1" fill="#808080"/><rect x="391" y="57" width="4" height="1" fill="#808080"/><rect x="396" y="57" width="4" height="1" fill="#808080"/><rect x="384" y="58" width="2" height="1" fill="#808080"/><rect x="392" y="58" width="4" height="1" fill="#808080"/><rect x="397" y="58" width="4" height="1" fill="#808080"/><rect x="384" y="59" width="13" height="1" fill="#808080"/><rect x="398" y="59" width="3" height="1" fill="#808080"/><rect x="384" y="60" width="14" height="1" fill="#808080"/><rect x="399" y="60" width="2" height="1" fill="#808080"/><rect x="386" y="53" width="1" height="6" fill="#ffffff"/><rect x="386" y="58" width="6" height="1" fill="#ffffff"/><rect x="421" y="54" width="12" height="4" fill="#ffffff"/><rect x="433" y="52" width="6" height="8" fill="#ffffff"/><rect x="420" y="53" width="12" height="4" fill="#808080"/><rect x="433" y="51" width="4" height="8" fill="#808080"/><rect x="432" y="52" width="6" height="6" fill="#808080"/><rect x="424" y="54" width="7" height="1" fill="#ffffff"/><rect x="433" y="52" width="1" height="2" fill="#ffffff"/><rect x="435" y="52" width="1" height="1" fill="#ffffff"/><rect x="436" y="53" width="1" height="1" fill="#ffffff"/><rect x="452" y="52" width="18" height="9" fill="#ffffff"/><rect x="452" y="51" width="16" height="9" fill="#808080"/><rect x="451" y="52" width="18" height="7" fill="#808080"/><rect x="486" y="50" width="21" height="11" fill="#808080"/><rect x="488" y="49" width="19" height="1" fill="#000080"/><rect x="487" y="50" width="1" height="10" fill="#000080"/><rect x="507" y="50" width="1" height="9" fill="#000080"/><rect x="487" y="59" width="20" height="1" fill="#000080"/><rect x="488" y="50" width="19" height="9" fill="#d4d0c8"/><rect x="493" y="53" width="4" height="1" fill="#ff0000"/><rect x="492" y="54" width="1" height="1" fill="#ff0000"/><rect x="496" y="54" width="2" height="1" fill="#ff0000"/><rect x="502" y="54" width="1" height="1" fill="#ff0000"/><rect x="492" y="55" width="1" height="1" fill="#ff0000"/><rect x="497" y="55" width="2" height="1" fill="#ff0000"/><rect x="501" y="55" width="2" height="1" fill="#ff0000"/><rect x="498" y="56" width="4" height="1" fill="#ff0000"/><rect x="522" y="50" width="13" height="1" fill="#ffffff"/><rect x="521" y="51" width="15" height="1" fill="#ffffff"/><rect x="520" y="52" width="17" height="1" fill="#ffffff"/><rect x="519" y="53" width="19" height="1" fill="#ffffff"/><rect x="519" y="54" width="19" height="1" fill="#ffffff"/><rect x="519" y="55" width="19" height="1" fill="#ffffff"/><rect x="519" y="56" width="19" height="1" fill="#ffffff"/><rect x="519" y="57" width="19" height="1" fill="#ffffff"/><rect x="519" y="58" width="19" height="1" fill="#ffffff"/><rect x="520" y="59" width="17" height="1" fill="#ffffff"/><rect x="521" y="60" width="15" height="1" fill="#ffffff"/><rect x="522" y="61" width="13" height="1" fill="#ffffff"/><rect x="521" y="49" width="13" height="1" fill="#808080"/><rect x="520" y="50" width="15" height="1" fill="#808080"/><rect x="519" y="51" width="17" height="1" fill="#808080"/><rect x="518" y="52" width="19" height="1" fill="#808080"/><rect x="518" y="53" width="19" height="1" fill="#808080"/><rect x="518" y="54" width="19" height="1" fill="#808080"/><rect x="518" y="55" width="19" height="1" fill="#808080"/><rect x="518" y="56" width="19" height="1" fill="#808080"/><rect x="518" y="57" width="19" height="1" fill="#808080"/><rect x="519" y="58" width="17" height="1" fill="#808080"/><rect x="520" y="59" width="15" height="1" fill="#808080"/><rect x="521" y="60" width="13" height="1" fill="#808080"/></svg>
<div class="t" style="left:14.00px;top:71px;font-size:11px;color:#000;transform:scaleX(0.9500);transform-origin:0 0;">Gen</div>
<div style="left:41px;top:71px;width:84px;height:21px;background:#ffffff;"></div>
<div style="left:41px;top:71px;width:83px;height:20px;background:#808080;"></div>
<div style="left:42px;top:72px;width:82px;height:19px;background:#d4d0c8;"></div>
<div style="left:42px;top:72px;width:81px;height:18px;background:#404040;"></div>
<div style="left:43px;top:73px;width:80px;height:17px;background:#ffffff;"></div>
<div style="left:107px;top:73px;width:16px;height:17px;background:#404040;"></div>
<div style="left:107px;top:73px;width:15px;height:16px;background:#d4d0c8;"></div>
<div style="left:108px;top:74px;width:14px;height:15px;background:#808080;"></div>
<div style="left:108px;top:74px;width:13px;height:14px;background:#ffffff;"></div>
<div style="left:109px;top:75px;width:12px;height:13px;background:#d4d0c8;"></div>
<div style="left:111px;top:79px;width:7px;height:1px;background:#000;"></div>
<div style="left:112px;top:80px;width:5px;height:1px;background:#000;"></div>
<div style="left:113px;top:81px;width:3px;height:1px;background:#000;"></div>
<div style="left:114px;top:82px;width:1px;height:1px;background:#000;"></div>
<div class="t" style="left:43.05px;top:72px;font-size:11px;color:#000;transform:scaleX(0.9524);transform-origin:0 0;">Sine</div>
<div class="t" style="left:133.03px;top:71px;font-size:11px;color:#000;transform:scaleX(0.9677);transform-origin:0 0;">Fs(Hz)</div>
<div style="left:170px;top:71px;width:62px;height:21px;background:#ffffff;"></div>
<div style="left:170px;top:71px;width:61px;height:20px;background:#808080;"></div>
<div style="left:171px;top:72px;width:60px;height:19px;background:#d4d0c8;"></div>
<div style="left:171px;top:72px;width:59px;height:18px;background:#404040;"></div>
<div style="left:172px;top:73px;width:58px;height:17px;background:#ffffff;"></div>
<div style="left:214px;top:73px;width:16px;height:17px;background:#404040;"></div>
<div style="left:214px;top:73px;width:15px;height:16px;background:#d4d0c8;"></div>
<div style="left:215px;top:74px;width:14px;height:15px;background:#808080;"></div>
<div style="left:215px;top:74px;width:13px;height:14px;background:#ffffff;"></div>
<div style="left:216px;top:75px;width:12px;height:13px;background:#d4d0c8;"></div>
<div style="left:218px;top:79px;width:7px;height:1px;background:#000;"></div>
<div style="left:219px;top:80px;width:5px;height:1px;background:#000;"></div>
<div style="left:220px;top:81px;width:3px;height:1px;background:#000;"></div>
<div style="left:221px;top:82px;width:1px;height:1px;background:#000;"></div>
<div class="t" style="left:172.97px;top:72px;font-size:11px;color:#000;transform:scaleX(1.0286);transform-origin:0 0;">192000</div>
<div class="t" style="left:241.11px;top:71px;font-size:11px;color:#000;transform:scaleX(0.8947);transform-origin:0 0;">FFT</div>
<div style="left:266px;top:71px;width:62px;height:21px;background:#ffffff;"></div>
<div style="left:266px;top:71px;width:61px;height:20px;background:#808080;"></div>
<div style="left:267px;top:72px;width:60px;height:19px;background:#d4d0c8;"></div>
<div style="left:267px;top:72px;width:59px;height:18px;background:#404040;"></div>
<div style="left:268px;top:73px;width:58px;height:17px;background:#ffffff;"></div>
<div style="left:310px;top:73px;width:16px;height:17px;background:#404040;"></div>
<div style="left:310px;top:73px;width:15px;height:16px;background:#d4d0c8;"></div>
<div style="left:311px;top:74px;width:14px;height:15px;background:#808080;"></div>
<div style="left:311px;top:74px;width:13px;height:14px;background:#ffffff;"></div>
<div style="left:312px;top:75px;width:12px;height:13px;background:#d4d0c8;"></div>
<div style="left:314px;top:79px;width:7px;height:1px;background:#000;"></div>
<div style="left:315px;top:80px;width:5px;height:1px;background:#000;"></div>
<div style="left:316px;top:81px;width:3px;height:1px;background:#000;"></div>
<div style="left:317px;top:82px;width:1px;height:1px;background:#000;"></div>
<div class="t" style="left:267.93px;top:72px;font-size:11px;color:#000;transform:scaleX(1.0690);transform-origin:0 0;">65536</div>
<div class="t" style="left:338.00px;top:71px;font-size:11px;color:#000;transform:scaleX(1.0000);transform-origin:0 0;">Wnd</div>
<div style="left:366px;top:71px;width:78px;height:21px;background:#ffffff;"></div>
<div style="left:366px;top:71px;width:77px;height:20px;background:#808080;"></div>
<div style="left:367px;top:72px;width:76px;height:19px;background:#d4d0c8;"></div>
<div style="left:367px;top:72px;width:75px;height:18px;background:#404040;"></div>
<div style="left:368px;top:73px;width:74px;height:17px;background:#ffffff;"></div>
<div style="left:426px;top:73px;width:16px;height:17px;background:#404040;"></div>
<div style="left:426px;top:73px;width:15px;height:16px;background:#d4d0c8;"></div>
<div style="left:427px;top:74px;width:14px;height:15px;background:#808080;"></div>
<div style="left:427px;top:74px;width:13px;height:14px;background:#ffffff;"></div>
<div style="left:428px;top:75px;width:12px;height:13px;background:#d4d0c8;"></div>
<div style="left:430px;top:79px;width:7px;height:1px;background:#000;"></div>
<div style="left:431px;top:80px;width:5px;height:1px;background:#000;"></div>
<div style="left:432px;top:81px;width:3px;height:1px;background:#000;"></div>
<div style="left:433px;top:82px;width:1px;height:1px;background:#000;"></div>
<div class="t" style="left:369.00px;top:72px;font-size:11px;color:#000;transform:scaleX(1.0000);transform-origin:0 0;">Hanning</div>
<div class="t" style="left:453.00px;top:71px;font-size:11px;color:#000;transform:scaleX(1.0556);transform-origin:0 0;">Avg</div>
<div style="left:480px;top:71px;width:63px;height:21px;background:#ffffff;"></div>
<div style="left:480px;top:71px;width:62px;height:20px;background:#808080;"></div>
<div style="left:481px;top:72px;width:61px;height:19px;background:#d4d0c8;"></div>
<div style="left:481px;top:72px;width:60px;height:18px;background:#404040;"></div>
<div style="left:482px;top:73px;width:59px;height:17px;background:#ffffff;"></div>
<div style="left:525px;top:73px;width:16px;height:17px;background:#404040;"></div>
<div style="left:525px;top:73px;width:15px;height:16px;background:#d4d0c8;"></div>
<div style="left:526px;top:74px;width:14px;height:15px;background:#808080;"></div>
<div style="left:526px;top:74px;width:13px;height:14px;background:#ffffff;"></div>
<div style="left:527px;top:75px;width:12px;height:13px;background:#d4d0c8;"></div>
<div style="left:529px;top:79px;width:7px;height:1px;background:#000;"></div>
<div style="left:530px;top:80px;width:5px;height:1px;background:#000;"></div>
<div style="left:531px;top:81px;width:3px;height:1px;background:#000;"></div>
<div style="left:532px;top:82px;width:1px;height:1px;background:#000;"></div>
<div class="t" style="left:481.96px;top:72px;font-size:11px;color:#000;transform:scaleX(1.0400);transform-origin:0 0;">None</div>
<div style="left:549px;top:71px;width:42px;height:21px;background:#404040;"></div>
<div style="left:549px;top:71px;width:41px;height:20px;background:#ffffff;"></div>
<div style="left:550px;top:72px;width:40px;height:19px;background:#808080;"></div>
<div style="left:550px;top:72px;width:39px;height:18px;background:#d4d0c8;"></div>
<div style="left:551px;top:73px;width:38px;height:17px;background:#d4d0c8;"></div>
<div class="t" style="left:555.04px;top:71px;font-size:11px;color:#000;transform:scaleX(0.9643);transform-origin:0 0;">Reset</div>
<div style="left:6px;top:94px;width:853px;height:489px;background:#ffffff;"></div>
<div style="left:6px;top:94px;width:852px;height:488px;background:#808080;"></div>
<div style="left:7px;top:95px;width:851px;height:487px;background:#d4d0c8;"></div>
<div style="left:7px;top:95px;width:850px;height:486px;background:#404040;"></div>
<div style="left:8px;top:96px;width:849px;height:485px;background:#d4d0c8;"></div>
<div style="left:859px;top:94px;width:48px;height:1px;background:#808080;"></div>
<div style="left:859px;top:95px;width:48px;height:1px;background:#ffffff;"></div>
<div style="left:859px;top:581px;width:48px;height:1px;background:#808080;"></div>
<div style="left:859px;top:582px;width:48px;height:1px;background:#ffffff;"></div>
<svg style="position:absolute;left:0;top:0" width="913" height="607" shape-rendering="crispEdges"><rect x="64" y="137" width="738" height="389" fill="#000"/><rect x="65" y="180" width="736" height="1" fill="#008020"/><rect x="65" y="223" width="736" height="1" fill="#008020"/><rect x="65" y="266" width="736" height="1" fill="#008020"/><rect x="65" y="309" width="736" height="1" fill="#008020"/><rect x="65" y="353" width="736" height="1" fill="#008020"/><rect x="65" y="396" width="736" height="1" fill="#008020"/><rect x="65" y="439" width="736" height="1" fill="#008020"/><rect x="65" y="482" width="736" height="1" fill="#008020"/><rect x="107" y="138" width="1" height="387" fill="#004010"/><rect x="138" y="138" width="1" height="387" fill="#004010"/><rect x="162" y="138" width="1" height="387" fill="#004010"/><rect x="181" y="138" width="1" height="387" fill="#004010"/><rect x="198" y="138" width="1" height="387" fill="#004010"/><rect x="212" y="138" width="1" height="387" fill="#004010"/><rect x="224" y="138" width="1" height="387" fill="#004010"/><rect x="236" y="138" width="1" height="387" fill="#008020"/><rect x="310" y="138" width="1" height="387" fill="#004010"/><rect x="353" y="138" width="1" height="387" fill="#004010"/><rect x="384" y="138" width="1" height="387" fill="#004010"/><rect x="407" y="138" width="1" height="387" fill="#004010"/><rect x="427" y="138" width="1" height="387" fill="#004010"/><rect x="443" y="138" width="1" height="387" fill="#004010"/><rect x="458" y="138" width="1" height="387" fill="#004010"/><rect x="470" y="138" width="1" height="387" fill="#004010"/><rect x="481" y="138" width="1" height="387" fill="#008020"/><rect x="555" y="138" width="1" height="387" fill="#004010"/><rect x="599" y="138" width="1" height="387" fill="#004010"/><rect x="629" y="138" width="1" height="387" fill="#004010"/><rect x="653" y="138" width="1" height="387" fill="#004010"/><rect x="673" y="138" width="1" height="387" fill="#004010"/><rect x="689" y="138" width="1" height="387" fill="#004010"/><rect x="703" y="138" width="1" height="387" fill="#004010"/><rect x="716" y="138" width="1" height="387" fill="#004010"/><rect x="727" y="138" width="1" height="387" fill="#008020"/><rect x="67" y="138" width="1" height="387" fill="#c0c000"/><path d="M154.5 524.5 L156 511 L161.5 487.5 L162.5 487.5 L168.5 524.5" stroke="#00ff00" stroke-width="1" fill="none"/><rect x="480" y="440" width="1" height="42" fill="#00ff00"/><rect x="479" y="482" width="1" height="43" fill="#00ff00"/><rect x="483" y="440" width="1" height="66" fill="#00ff00"/><rect x="484" y="506" width="1" height="19" fill="#00ff00"/><rect x="479" y="482" width="2" height="1" fill="#00ff00"/><rect x="483" y="506" width="2" height="1" fill="#00ff00"/></svg>
<div class="t" style="left:65.99px;top:117px;font-size:13px;color:#000;transform:scaleX(1.0136);transform-origin:0 0;">Spectrum magnitude dBV</div>
<div class="t" style="left:745.08px;top:117px;font-size:13px;color:#000;transform:scaleX(0.9167);transform-origin:0 0;">Left  Avg:0</div>
<div class="t" style="left:43.00px;top:128px;font-size:13px;color:#000;transform:scaleX(0.8889);transform-origin:0 0;">0.0</div>
<div class="t" style="left:30.00px;top:171px;font-size:13px;color:#000;transform:scaleX(1.0000);transform-origin:0 0;">-10.0</div>
<div class="t" style="left:30.00px;top:214px;font-size:13px;color:#000;transform:scaleX(1.0000);transform-origin:0 0;">-20.0</div>
<div class="t" style="left:30.00px;top:257px;font-size:13px;color:#000;transform:scaleX(1.0000);transform-origin:0 0;">-30.0</div>
<div class="t" style="left:30.00px;top:300px;font-size:13px;color:#000;transform:scaleX(1.0000);transform-origin:0 0;">-40.0</div>
<div class="t" style="left:30.00px;top:344px;font-size:13px;color:#000;transform:scaleX(1.0000);transform-origin:0 0;">-50.0</div>
<div class="t" style="left:30.00px;top:387px;font-size:13px;color:#000;transform:scaleX(1.0000);transform-origin:0 0;">-60.0</div>
<div class="t" style="left:30.00px;top:430px;font-size:13px;color:#000;transform:scaleX(1.0000);transform-origin:0 0;">-70.0</div>
<div class="t" style="left:30.00px;top:473px;font-size:13px;color:#000;transform:scaleX(1.0000);transform-origin:0 0;">-80.0</div>
<div class="t" style="left:30.00px;top:516px;font-size:13px;color:#000;transform:scaleX(1.0000);transform-origin:0 0;">-90.0</div>
<div class="t" style="left:57.00px;top:530px;font-size:13px;color:#000;transform:scaleX(1.0000);transform-origin:0 0;">20</div>
<div class="t" style="left:153.92px;top:530px;font-size:13px;color:#000;transform:scaleX(1.0769);transform-origin:0 0;">50</div>
<div class="t" style="left:224.95px;top:530px;font-size:13px;color:#000;transform:scaleX(1.0500);transform-origin:0 0;">100</div>
<div class="t" style="left:300.00px;top:530px;font-size:13px;color:#000;transform:scaleX(1.0000);transform-origin:0 0;">200</div>
<div class="t" style="left:397.00px;top:530px;font-size:13px;color:#000;transform:scaleX(1.0000);transform-origin:0 0;">500</div>
<div class="t" style="left:473.92px;top:530px;font-size:13px;color:#000;transform:scaleX(1.0769);transform-origin:0 0;">1k</div>
<div class="t" style="left:549.00px;top:530px;font-size:13px;color:#000;transform:scaleX(1.0000);transform-origin:0 0;">2k</div>
<div class="t" style="left:645.92px;top:530px;font-size:13px;color:#000;transform:scaleX(1.0769);transform-origin:0 0;">5k</div>
<div class="t" style="left:715.95px;top:530px;font-size:13px;color:#000;transform:scaleX(1.0500);transform-origin:0 0;">10k</div>
<div class="t" style="left:788.90px;top:530px;font-size:13px;color:#000;transform:scaleX(1.1000);transform-origin:0 0;">20k</div>
<div class="t" style="left:721.05px;top:545px;font-size:13px;color:#000;transform:scaleX(0.9524);transform-origin:0 0;">Frequency(Hz)</div>
<div class="t" style="left:64.02px;top:545px;font-size:13px;color:#000;transform:scaleX(0.9756);transform-origin:0 0;">Cursor:</div>
<div class="t" style="left:117.06px;top:545px;font-size:13px;color:#000;transform:scaleX(0.9381);transform-origin:0 0;">20.5 Hz, -112.70 dB</div>
<div class="t" style="left:64.10px;top:563px;font-size:13px;color:#cc0000;transform:scaleX(0.8974);transform-origin:0 0;">RMS =</div>
<div class="t" style="left:105.07px;top:563px;font-size:13px;color:#cc0000;transform:scaleX(0.9298);transform-origin:0 0;">-23.2 dBV</div>
<div class="t" style="left:172.00px;top:563px;font-size:13px;color:#cc0000;transform:scaleX(0.9146);transform-origin:0 0;">THD =0.044%</div>
<div class="t" style="left:260.00px;top:563px;font-size:13px;color:#cc0000;transform:scaleX(0.9239);transform-origin:0 0;">THD+N =0.26%</div>
<div class="t" style="left:806.00px;top:136px;font-size:13px;color:#000;transform:scaleX(1.1111);transform-origin:0 0;">A</div>
<div class="t" style="left:806.00px;top:150px;font-size:13px;color:#000;transform:scaleX(1.0000);transform-origin:0 0;">R</div>
<div class="t" style="left:806.00px;top:164px;font-size:13px;color:#000;transform:scaleX(1.2500);transform-origin:0 0;">T</div>
<div class="t" style="left:806.00px;top:178px;font-size:13px;color:#000;transform:scaleX(1.1111);transform-origin:0 0;">A</div>
<div class="t" style="left:873.00px;top:96px;font-size:11px;color:#000;transform:scaleX(1.0000);transform-origin:0 0;">Top</div>
<div style="left:873px;top:118px;width:16px;height:17px;background:#404040;"></div>
<div style="left:873px;top:118px;width:15px;height:16px;background:#d4d0c8;"></div>
<div style="left:874px;top:119px;width:14px;height:15px;background:#808080;"></div>
<div style="left:874px;top:119px;width:13px;height:14px;background:#ffffff;"></div>
<div style="left:875px;top:120px;width:12px;height:13px;background:#d4d0c8;"></div>
<div style="left:880px;top:124px;width:1px;height:1px;background:#000;"></div>
<div style="left:879px;top:125px;width:3px;height:1px;background:#000;"></div>
<div style="left:878px;top:126px;width:5px;height:1px;background:#000;"></div>
<div style="left:877px;top:127px;width:7px;height:1px;background:#000;"></div>
<div style="left:873px;top:135px;width:16px;height:17px;background:#404040;"></div>
<div style="left:873px;top:135px;width:15px;height:16px;background:#d4d0c8;"></div>
<div style="left:874px;top:136px;width:14px;height:15px;background:#808080;"></div>
<div style="left:874px;top:136px;width:13px;height:14px;background:#ffffff;"></div>
<div style="left:875px;top:137px;width:12px;height:13px;background:#d4d0c8;"></div>
<div style="left:877px;top:141px;width:7px;height:1px;background:#000;"></div>
<div style="left:878px;top:142px;width:5px;height:1px;background:#000;"></div>
<div style="left:879px;top:143px;width:3px;height:1px;background:#000;"></div>
<div style="left:880px;top:144px;width:1px;height:1px;background:#000;"></div>
<div style="left:867px;top:162px;width:30px;height:20px;background:#404040;"></div>
<div style="left:867px;top:162px;width:29px;height:19px;background:#ffffff;"></div>
<div style="left:868px;top:163px;width:28px;height:18px;background:#808080;"></div>
<div style="left:868px;top:163px;width:27px;height:17px;background:#d4d0c8;"></div>
<div style="left:869px;top:164px;width:26px;height:16px;background:#d4d0c8;"></div>
<div class="t" style="left:875.00px;top:162px;font-size:11px;color:#000;transform:scaleX(1.0000);transform-origin:0 0;">Fit</div>
<div class="t" style="left:866.00px;top:193px;font-size:11px;color:#000;transform:scaleX(1.0000);transform-origin:0 0;">Range</div>
<div style="left:873px;top:214px;width:16px;height:17px;background:#404040;"></div>
<div style="left:873px;top:214px;width:15px;height:16px;background:#d4d0c8;"></div>
<div style="left:874px;top:215px;width:14px;height:15px;background:#808080;"></div>
<div style="left:874px;top:215px;width:13px;height:14px;background:#ffffff;"></div>
<div style="left:875px;top:216px;width:12px;height:13px;background:#d4d0c8;"></div>
<div style="left:880px;top:220px;width:1px;height:1px;background:#000;"></div>
<div style="left:879px;top:221px;width:3px;height:1px;background:#000;"></div>
<div style="left:878px;top:222px;width:5px;height:1px;background:#000;"></div>
<div style="left:877px;top:223px;width:7px;height:1px;background:#000;"></div>
<div style="left:873px;top:231px;width:16px;height:17px;background:#404040;"></div>
<div style="left:873px;top:231px;width:15px;height:16px;background:#d4d0c8;"></div>
<div style="left:874px;top:232px;width:14px;height:15px;background:#808080;"></div>
<div style="left:874px;top:232px;width:13px;height:14px;background:#ffffff;"></div>
<div style="left:875px;top:233px;width:12px;height:13px;background:#d4d0c8;"></div>
<div style="left:877px;top:237px;width:7px;height:1px;background:#000;"></div>
<div style="left:878px;top:238px;width:5px;height:1px;background:#000;"></div>
<div style="left:879px;top:239px;width:3px;height:1px;background:#000;"></div>
<div style="left:880px;top:240px;width:1px;height:1px;background:#000;"></div>
<div style="left:867px;top:263px;width:30px;height:21px;background:#404040;"></div>
<div style="left:867px;top:263px;width:29px;height:20px;background:#ffffff;"></div>
<div style="left:868px;top:264px;width:28px;height:19px;background:#808080;"></div>
<div style="left:868px;top:264px;width:27px;height:18px;background:#d4d0c8;"></div>
<div style="left:869px;top:265px;width:26px;height:17px;background:#d4d0c8;"></div>
<div class="t" style="left:873.00px;top:263px;font-size:11px;color:#000;transform:scaleX(1.0000);transform-origin:0 0;">Set</div>
<div class="t" style="left:866.03px;top:296px;font-size:11px;color:#000;transform:scaleX(0.9688);transform-origin:0 0;">FrHigh</div>
<div style="left:867px;top:318px;width:15px;height:16px;background:#404040;"></div>
<div style="left:867px;top:318px;width:14px;height:15px;background:#d4d0c8;"></div>
<div style="left:868px;top:319px;width:13px;height:14px;background:#808080;"></div>
<div style="left:868px;top:319px;width:12px;height:13px;background:#ffffff;"></div>
<div style="left:869px;top:320px;width:11px;height:12px;background:#d4d0c8;"></div>
<div style="left:872px;top:325px;width:1px;height:1px;background:#000;"></div>
<div style="left:873px;top:324px;width:1px;height:3px;background:#000;"></div>
<div style="left:874px;top:323px;width:1px;height:5px;background:#000;"></div>
<div style="left:882px;top:318px;width:15px;height:16px;background:#404040;"></div>
<div style="left:882px;top:318px;width:14px;height:15px;background:#d4d0c8;"></div>
<div style="left:883px;top:319px;width:13px;height:14px;background:#808080;"></div>
<div style="left:883px;top:319px;width:12px;height:13px;background:#ffffff;"></div>
<div style="left:884px;top:320px;width:11px;height:12px;background:#d4d0c8;"></div>
<div style="left:889px;top:323px;width:1px;height:5px;background:#000;"></div>
<div style="left:890px;top:324px;width:1px;height:3px;background:#000;"></div>
<div style="left:891px;top:325px;width:1px;height:1px;background:#000;"></div>
<div class="t" style="left:869.07px;top:341px;font-size:11px;color:#000;transform:scaleX(0.9333);transform-origin:0 0;">FrLow</div>
<div style="left:867px;top:361px;width:15px;height:16px;background:#404040;"></div>
<div style="left:867px;top:361px;width:14px;height:15px;background:#d4d0c8;"></div>
<div style="left:868px;top:362px;width:13px;height:14px;background:#808080;"></div>
<div style="left:868px;top:362px;width:12px;height:13px;background:#ffffff;"></div>
<div style="left:869px;top:363px;width:11px;height:12px;background:#d4d0c8;"></div>
<div style="left:872px;top:368px;width:1px;height:1px;background:#000;"></div>
<div style="left:873px;top:367px;width:1px;height:3px;background:#000;"></div>
<div style="left:874px;top:366px;width:1px;height:5px;background:#000;"></div>
<div style="left:882px;top:361px;width:15px;height:16px;background:#404040;"></div>
<div style="left:882px;top:361px;width:14px;height:15px;background:#d4d0c8;"></div>
<div style="left:883px;top:362px;width:13px;height:14px;background:#808080;"></div>
<div style="left:883px;top:362px;width:12px;height:13px;background:#ffffff;"></div>
<div style="left:884px;top:363px;width:11px;height:12px;background:#d4d0c8;"></div>
<div style="left:889px;top:366px;width:1px;height:5px;background:#000;"></div>
<div style="left:890px;top:367px;width:1px;height:3px;background:#000;"></div>
<div style="left:891px;top:368px;width:1px;height:1px;background:#000;"></div>
<div class="t" style="left:7.00px;top:583px;font-size:11px;color:#000;transform:scaleX(1.0000);transform-origin:0 0;">Ready</div>
<div style="left:583px;top:585px;width:73px;height:16px;background:#ffffff;"></div>
<div style="left:583px;top:585px;width:72px;height:15px;background:#808080;"></div>
<div style="left:584px;top:586px;width:71px;height:14px;background:#d4d0c8;"></div>
<div class="t" style="left:585.96px;top:583px;font-size:11px;color:#000;transform:scaleX(1.0435);transform-origin:0 0;">L:-20.1dB</div>
<div style="left:658px;top:585px;width:73px;height:16px;background:#ffffff;"></div>
<div style="left:658px;top:585px;width:72px;height:15px;background:#808080;"></div>
<div style="left:659px;top:586px;width:71px;height:14px;background:#d4d0c8;"></div>
<div class="t" style="left:661.98px;top:583px;font-size:11px;color:#000;transform:scaleX(1.0208);transform-origin:0 0;">R:-25.2dB</div>
<div style="left:733px;top:585px;width:156px;height:16px;background:#ffffff;"></div>
<div style="left:733px;top:585px;width:155px;height:15px;background:#808080;"></div>
<div style="left:734px;top:586px;width:154px;height:14px;background:#d4d0c8;"></div>
<div class="t" style="left:736.00px;top:583px;font-size:11px;color:#000;transform:scaleX(1.0000);transform-origin:0 0;">Spectrum Analyzer</div>
<svg style="position:absolute;left:0;top:0" width="913" height="607" shape-rendering="crispEdges"><rect x="894" y="599" width="1" height="1" fill="#fff"/><rect x="895" y="599" width="1" height="1" fill="#808080"/><rect x="896" y="599" width="1" height="1" fill="#808080"/><rect x="895" y="598" width="1" height="1" fill="#fff"/><rect x="896" y="598" width="1" height="1" fill="#808080"/><rect x="897" y="598" width="1" height="1" fill="#808080"/><rect x="896" y="597" width="1" height="1" fill="#fff"/><rect x="897" y="597" width="1" height="1" fill="#808080"/><rect x="898" y="597" width="1" height="1" fill="#808080"/><rect x="897" y="596" width="1" height="1" fill="#fff"/><rect x="898" y="596" width="1" height="1" fill="#808080"/><rect x="899" y="596" width="1" height="1" fill="#808080"/><rect x="898" y="595" width="1" height="1" fill="#fff"/><rect x="899" y="595" width="1" height="1" fill="#808080"/><rect x="900" y="595" width="1" height="1" fill="#808080"/><rect x="899" y="594" width="1" height="1" fill="#fff"/><rect x="900" y="594" width="1" height="1" fill="#808080"/><rect x="901" y="594" width="1" height="1" fill="#808080"/><rect x="900" y="593" width="1" height="1" fill="#fff"/><rect x="901" y="593" width="1" height="1" fill="#808080"/><rect x="902" y="593" width="1" height="1" fill="#808080"/><rect x="901" y="592" width="1" height="1" fill="#fff"/><rect x="902" y="592" width="1" height="1" fill="#808080"/><rect x="903" y="592" width="1" height="1" fill="#808080"/><rect x="902" y="591" width="1" height="1" fill="#fff"/><rect x="903" y="591" width="1" height="1" fill="#808080"/><rect x="904" y="591" width="1" height="1" fill="#808080"/><rect x="903" y="590" width="1" height="1" fill="#fff"/><rect x="904" y="590" width="1" height="1" fill="#808080"/><rect x="905" y="590" width="1" height="1" fill="#808080"/><rect x="904" y="589" width="1" height="1" fill="#fff"/><rect x="905" y="589" width="1" height="1" fill="#808080"/><rect x="905" y="588" width="1" height="1" fill="#fff"/><rect x="898" y="599" width="1" height="1" fill="#fff"/><rect x="899" y="599" width="1" height="1" fill="#808080"/><rect x="900" y="599" width="1" height="1" fill="#808080"/><rect x="899" y="598" width="1" height="1" fill="#fff"/><rect x="900" y="598" width="1" height="1" fill="#808080"/><rect x="901" y="598" width="1" height="1" fill="#808080"/><rect x="900" y="597" width="1" height="1" fill="#fff"/><rect x="901" y="597" width="1" height="1" fill="#808080"/><rect x="902" y="597" width="1" height="1" fill="#808080"/><rect x="901" y="596" width="1" height="1" fill="#fff"/><rect x="902" y="596" width="1" height="1" fill="#808080"/><rect x="903" y="596" width="1" height="1" fill="#808080"/><rect x="902" y="595" width="1" height="1" fill="#fff"/><rect x="903" y="595" width="1" height="1" fill="#808080"/><rect x="904" y="595" width="1" height="1" fill="#808080"/><rect x="903" y="594" width="1" height="1" fill="#fff"/><rect x="904" y="594" width="1" height="1" fill="#808080"/><rect x="905" y="594" width="1" height="1" fill="#808080"/><rect x="904" y="593" width="1" height="1" fill="#fff"/><rect x="905" y="593" width="1" height="1" fill="#808080"/><rect x="905" y="592" width="1" height="1" fill="#fff"/><rect x="902" y="599" width="1" height="1" fill="#fff"/><rect x="903" y="599" width="1" height="1" fill="#808080"/><rect x="904" y="599" width="1" height="1" fill="#808080"/><rect x="903" y="598" width="1" height="1" fill="#fff"/><rect x="904" y="598" width="1" height="1" fill="#808080"/><rect x="905" y="598" width="1" height="1" fill="#808080"/><rect x="904" y="597" width="1" height="1" fill="#fff"/><rect x="905" y="597" width="1" height="1" fill="#808080"/><rect x="905" y="596" width="1" height="1" fill="#fff"/></svg>
<div style="left:907px;top:603px;width:6px;height:4px;background:#000;"></div>
<div style="left:261px;top:158px;width:390px;height:288px;background:#404040;"></div>
<div style="left:261px;top:158px;width:389px;height:287px;background:#d4d0c8;"></div>
<div style="left:262px;top:159px;width:388px;height:286px;background:#808080;"></div>
<div style="left:262px;top:159px;width:387px;height:285px;background:#ffffff;"></div>
<div style="left:263px;top:160px;width:386px;height:284px;background:#d4d0c8;"></div>
<div style="left:264px;top:161px;width:384px;height:18px;background:linear-gradient(to right,#0a246a,#a6caf0);"></div>
<div class="t" style="left:266.00px;top:160px;font-size:11px;color:#fff;transform:scaleX(1.0652);transform-origin:0 0;font-weight:bold;">Spectrum Scaling</div>
<div style="left:630px;top:163px;width:16px;height:14px;background:#404040;"></div>
<div style="left:630px;top:163px;width:15px;height:13px;background:#ffffff;"></div>
<div style="left:631px;top:164px;width:14px;height:12px;background:#808080;"></div>
<div style="left:631px;top:164px;width:13px;height:11px;background:#d4d0c8;"></div>
<div style="left:632px;top:165px;width:12px;height:10px;background:#d4d0c8;"></div>
<svg style="position:absolute;left:634px;top:166px" width="9" height="8" shape-rendering="crispEdges"><path d="M0 0h2v1h-2zM6 0h2v1h-2zM1 1h2v1h-2zM5 1h2v1h-2zM2 2h4v1h-4zM3 3h2v1h-2zM2 4h4v1h-4zM1 5h2v1h-2zM5 5h2v1h-2zM0 6h2v1h-2zM6 6h2v1h-2z" fill="#000"/></svg>
<div style="left:273px;top:191px;width:212px;height:1px;background:#808080;"></div>
<div style="left:273px;top:191px;width:1px;height:110px;background:#808080;"></div>
<div style="left:484px;top:191px;width:1px;height:110px;background:#808080;"></div>
<div style="left:273px;top:300px;width:212px;height:1px;background:#808080;"></div>
<div style="left:274px;top:192px;width:210px;height:1px;background:#ffffff;"></div>
<div style="left:274px;top:192px;width:1px;height:108px;background:#ffffff;"></div>
<div style="left:485px;top:191px;width:1px;height:111px;background:#ffffff;"></div>
<div style="left:273px;top:301px;width:213px;height:1px;background:#ffffff;"></div>
<div style="left:280px;top:191px;width:37px;height:2px;background:#d4d0c8;"></div>
<div class="t" style="left:281.06px;top:183px;font-size:11px;color:#000;transform:scaleX(0.9429);transform-origin:0 0;">Scaling</div>
<div style="left:495px;top:191px;width:142px;height:1px;background:#808080;"></div>
<div style="left:495px;top:191px;width:1px;height:110px;background:#808080;"></div>
<div style="left:636px;top:191px;width:1px;height:110px;background:#808080;"></div>
<div style="left:495px;top:300px;width:142px;height:1px;background:#808080;"></div>
<div style="left:496px;top:192px;width:140px;height:1px;background:#ffffff;"></div>
<div style="left:496px;top:192px;width:1px;height:108px;background:#ffffff;"></div>
<div style="left:637px;top:191px;width:1px;height:111px;background:#ffffff;"></div>
<div style="left:495px;top:301px;width:143px;height:1px;background:#ffffff;"></div>
<div style="left:501px;top:191px;width:35px;height:2px;background:#d4d0c8;"></div>
<div class="t" style="left:503.00px;top:183px;font-size:11px;color:#000;transform:scaleX(1.0000);transform-origin:0 0;">Power</div>
<div style="left:273px;top:313px;width:284px;height:1px;background:#808080;"></div>
<div style="left:273px;top:313px;width:1px;height:120px;background:#808080;"></div>
<div style="left:556px;top:313px;width:1px;height:120px;background:#808080;"></div>
<div style="left:273px;top:432px;width:284px;height:1px;background:#808080;"></div>
<div style="left:274px;top:314px;width:282px;height:1px;background:#ffffff;"></div>
<div style="left:274px;top:314px;width:1px;height:118px;background:#ffffff;"></div>
<div style="left:557px;top:313px;width:1px;height:121px;background:#ffffff;"></div>
<div style="left:273px;top:433px;width:285px;height:1px;background:#ffffff;"></div>
<div style="left:280px;top:313px;width:50px;height:2px;background:#d4d0c8;"></div>
<div class="t" style="left:280.98px;top:305px;font-size:11px;color:#000;transform:scaleX(1.0222);transform-origin:0 0;">Distortion</div>
<svg style="position:absolute;left:286px;top:209px" width="12" height="12" shape-rendering="crispEdges"><rect x="4" y="0" width="1" height="1" fill="#808080"/><rect x="5" y="0" width="1" height="1" fill="#808080"/><rect x="6" y="0" width="1" height="1" fill="#808080"/><rect x="7" y="0" width="1" height="1" fill="#808080"/><rect x="2" y="1" width="1" height="1" fill="#808080"/><rect x="3" y="1" width="1" height="1" fill="#808080"/><rect x="4" y="1" width="1" height="1" fill="#404040"/><rect x="5" y="1" width="1" height="1" fill="#404040"/><rect x="6" y="1" width="1" height="1" fill="#404040"/><rect x="7" y="1" width="1" height="1" fill="#404040"/><rect x="8" y="1" width="1" height="1" fill="#808080"/><rect x="9" y="1" width="1" height="1" fill="#808080"/><rect x="1" y="2" width="1" height="1" fill="#808080"/><rect x="2" y="2" width="1" height="1" fill="#404040"/><rect x="3" y="2" width="1" height="1" fill="#404040"/><rect x="4" y="2" width="1" height="1" fill="#ffffff"/><rect x="5" y="2" width="1" height="1" fill="#ffffff"/><rect x="6" y="2" width="1" height="1" fill="#ffffff"/><rect x="7" y="2" width="1" height="1" fill="#ffffff"/><rect x="8" y="2" width="1" height="1" fill="#ffffff"/><rect x="9" y="2" width="1" height="1" fill="#404040"/><rect x="10" y="2" width="1" height="1" fill="#ffffff"/><rect x="1" y="3" width="1" height="1" fill="#808080"/><rect x="2" y="3" width="1" height="1" fill="#404040"/><rect x="3" y="3" width="1" height="1" fill="#ffffff"/><rect x="4" y="3" width="1" height="1" fill="#ffffff"/><rect x="5" y="3" width="1" height="1" fill="#ffffff"/><rect x="6" y="3" width="1" height="1" fill="#ffffff"/><rect x="7" y="3" width="1" height="1" fill="#ffffff"/><rect x="8" y="3" width="1" height="1" fill="#ffffff"/><rect x="9" y="3" width="1" height="1" fill="#d4d0c8"/><rect x="10" y="3" width="1" height="1" fill="#ffffff"/><rect x="0" y="4" width="1" height="1" fill="#808080"/><rect x="1" y="4" width="1" height="1" fill="#404040"/><rect x="2" y="4" width="1" height="1" fill="#ffffff"/><rect x="3" y="4" width="1" height="1" fill="#ffffff"/><rect x="4" y="4" width="1" height="1" fill="#ffffff"/><rect x="5" y="4" width="1" height="1" fill="#ffffff"/><rect x="6" y="4" width="1" height="1" fill="#ffffff"/><rect x="7" y="4" width="1" height="1" fill="#ffffff"/><rect x="8" y="4" width="1" height="1" fill="#ffffff"/><rect x="9" y="4" width="1" height="1" fill="#ffffff"/><rect x="10" y="4" width="1" height="1" fill="#d4d0c8"/><rect x="11" y="4" width="1" height="1" fill="#ffffff"/><rect x="0" y="5" width="1" height="1" fill="#808080"/><rect x="1" y="5" width="1" height="1" fill="#404040"/><rect x="2" y="5" width="1" height="1" fill="#ffffff"/><rect x="3" y="5" width="1" height="1" fill="#ffffff"/><rect x="4" y="5" width="1" height="1" fill="#ffffff"/><rect x="5" y="5" width="1" height="1" fill="#ffffff"/><rect x="6" y="5" width="1" height="1" fill="#ffffff"/><rect x="7" y="5" width="1" height="1" fill="#ffffff"/><rect x="8" y="5" width="1" height="1" fill="#ffffff"/><rect x="9" y="5" width="1" height="1" fill="#ffffff"/><rect x="10" y="5" width="1" height="1" fill="#d4d0c8"/><rect x="11" y="5" width="1" height="1" fill="#ffffff"/><rect x="0" y="6" width="1" height="1" fill="#808080"/><rect x="1" y="6" width="1" height="1" fill="#404040"/><rect x="2" y="6" width="1" height="1" fill="#ffffff"/><rect x="3" y="6" width="1" height="1" fill="#ffffff"/><rect x="4" y="6" width="1" height="1" fill="#ffffff"/><rect x="5" y="6" width="1" height="1" fill="#ffffff"/><rect x="6" y="6" width="1" height="1" fill="#ffffff"/><rect x="7" y="6" width="1" height="1" fill="#ffffff"/><rect x="8" y="6" width="1" height="1" fill="#ffffff"/><rect x="9" y="6" width="1" height="1" fill="#ffffff"/><rect x="10" y="6" width="1" height="1" fill="#d4d0c8"/><rect x="11" y="6" width="1" height="1" fill="#ffffff"/><rect x="0" y="7" width="1" height="1" fill="#808080"/><rect x="1" y="7" width="1" height="1" fill="#404040"/><rect x="2" y="7" width="1" height="1" fill="#ffffff"/><rect x="3" y="7" width="1" height="1" fill="#ffffff"/><rect x="4" y="7" width="1" height="1" fill="#ffffff"/><rect x="5" y="7" width="1" height="1" fill="#ffffff"/><rect x="6" y="7" width="1" height="1" fill="#ffffff"/><rect x="7" y="7" width="1" height="1" fill="#ffffff"/><rect x="8" y="7" width="1" height="1" fill="#ffffff"/><rect x="9" y="7" width="1" height="1" fill="#ffffff"/><rect x="10" y="7" width="1" height="1" fill="#d4d0c8"/><rect x="11" y="7" width="1" height="1" fill="#ffffff"/><rect x="1" y="8" width="1" height="1" fill="#808080"/><rect x="2" y="8" width="1" height="1" fill="#404040"/><rect x="3" y="8" width="1" height="1" fill="#ffffff"/><rect x="4" y="8" width="1" height="1" fill="#ffffff"/><rect x="5" y="8" width="1" height="1" fill="#ffffff"/><rect x="6" y="8" width="1" height="1" fill="#ffffff"/><rect x="7" y="8" width="1" height="1" fill="#ffffff"/><rect x="8" y="8" width="1" height="1" fill="#ffffff"/><rect x="9" y="8" width="1" height="1" fill="#d4d0c8"/><rect x="10" y="8" width="1" height="1" fill="#ffffff"/><rect x="1" y="9" width="1" height="1" fill="#ffffff"/><rect x="2" y="9" width="1" height="1" fill="#d4d0c8"/><rect x="3" y="9" width="1" height="1" fill="#d4d0c8"/><rect x="4" y="9" width="1" height="1" fill="#ffffff"/><rect x="5" y="9" width="1" height="1" fill="#ffffff"/><rect x="6" y="9" width="1" height="1" fill="#ffffff"/><rect x="7" y="9" width="1" height="1" fill="#ffffff"/><rect x="8" y="9" width="1" height="1" fill="#d4d0c8"/><rect x="9" y="9" width="1" height="1" fill="#d4d0c8"/><rect x="10" y="9" width="1" height="1" fill="#ffffff"/><rect x="2" y="10" width="1" height="1" fill="#ffffff"/><rect x="3" y="10" width="1" height="1" fill="#ffffff"/><rect x="4" y="10" width="1" height="1" fill="#d4d0c8"/><rect x="5" y="10" width="1" height="1" fill="#d4d0c8"/><rect x="6" y="10" width="1" height="1" fill="#d4d0c8"/><rect x="7" y="10" width="1" height="1" fill="#d4d0c8"/><rect x="8" y="10" width="1" height="1" fill="#ffffff"/><rect x="9" y="10" width="1" height="1" fill="#ffffff"/><rect x="4" y="11" width="1" height="1" fill="#ffffff"/><rect x="5" y="11" width="1" height="1" fill="#ffffff"/><rect x="6" y="11" width="1" height="1" fill="#ffffff"/><rect x="7" y="11" width="1" height="1" fill="#ffffff"/></svg>
<div class="t" style="left:303.00px;top:206px;font-size:11px;color:#000;transform:scaleX(0.9000);transform-origin:0 0;">dB FS</div>
<svg style="position:absolute;left:342px;top:209px" width="12" height="12" shape-rendering="crispEdges"><rect x="4" y="0" width="1" height="1" fill="#808080"/><rect x="5" y="0" width="1" height="1" fill="#808080"/><rect x="6" y="0" width="1" height="1" fill="#808080"/><rect x="7" y="0" width="1" height="1" fill="#808080"/><rect x="2" y="1" width="1" height="1" fill="#808080"/><rect x="3" y="1" width="1" height="1" fill="#808080"/><rect x="4" y="1" width="1" height="1" fill="#404040"/><rect x="5" y="1" width="1" height="1" fill="#404040"/><rect x="6" y="1" width="1" height="1" fill="#404040"/><rect x="7" y="1" width="1" height="1" fill="#404040"/><rect x="8" y="1" width="1" height="1" fill="#808080"/><rect x="9" y="1" width="1" height="1" fill="#808080"/><rect x="1" y="2" width="1" height="1" fill="#808080"/><rect x="2" y="2" width="1" height="1" fill="#404040"/><rect x="3" y="2" width="1" height="1" fill="#404040"/><rect x="4" y="2" width="1" height="1" fill="#ffffff"/><rect x="5" y="2" width="1" height="1" fill="#ffffff"/><rect x="6" y="2" width="1" height="1" fill="#ffffff"/><rect x="7" y="2" width="1" height="1" fill="#ffffff"/><rect x="8" y="2" width="1" height="1" fill="#ffffff"/><rect x="9" y="2" width="1" height="1" fill="#404040"/><rect x="10" y="2" width="1" height="1" fill="#ffffff"/><rect x="1" y="3" width="1" height="1" fill="#808080"/><rect x="2" y="3" width="1" height="1" fill="#404040"/><rect x="3" y="3" width="1" height="1" fill="#ffffff"/><rect x="4" y="3" width="1" height="1" fill="#ffffff"/><rect x="5" y="3" width="1" height="1" fill="#ffffff"/><rect x="6" y="3" width="1" height="1" fill="#ffffff"/><rect x="7" y="3" width="1" height="1" fill="#ffffff"/><rect x="8" y="3" width="1" height="1" fill="#ffffff"/><rect x="9" y="3" width="1" height="1" fill="#d4d0c8"/><rect x="10" y="3" width="1" height="1" fill="#ffffff"/><rect x="0" y="4" width="1" height="1" fill="#808080"/><rect x="1" y="4" width="1" height="1" fill="#404040"/><rect x="2" y="4" width="1" height="1" fill="#ffffff"/><rect x="3" y="4" width="1" height="1" fill="#ffffff"/><rect x="4" y="4" width="1" height="1" fill="#ffffff"/><rect x="5" y="4" width="1" height="1" fill="#ffffff"/><rect x="6" y="4" width="1" height="1" fill="#ffffff"/><rect x="7" y="4" width="1" height="1" fill="#ffffff"/><rect x="8" y="4" width="1" height="1" fill="#ffffff"/><rect x="9" y="4" width="1" height="1" fill="#ffffff"/><rect x="10" y="4" width="1" height="1" fill="#d4d0c8"/><rect x="11" y="4" width="1" height="1" fill="#ffffff"/><rect x="0" y="5" width="1" height="1" fill="#808080"/><rect x="1" y="5" width="1" height="1" fill="#404040"/><rect x="2" y="5" width="1" height="1" fill="#ffffff"/><rect x="3" y="5" width="1" height="1" fill="#ffffff"/><rect x="4" y="5" width="1" height="1" fill="#ffffff"/><rect x="5" y="5" width="1" height="1" fill="#ffffff"/><rect x="6" y="5" width="1" height="1" fill="#ffffff"/><rect x="7" y="5" width="1" height="1" fill="#ffffff"/><rect x="8" y="5" width="1" height="1" fill="#ffffff"/><rect x="9" y="5" width="1" height="1" fill="#ffffff"/><rect x="10" y="5" width="1" height="1" fill="#d4d0c8"/><rect x="11" y="5" width="1" height="1" fill="#ffffff"/><rect x="0" y="6" width="1" height="1" fill="#808080"/><rect x="1" y="6" width="1" height="1" fill="#404040"/><rect x="2" y="6" width="1" height="1" fill="#ffffff"/><rect x="3" y="6" width="1" height="1" fill="#ffffff"/><rect x="4" y="6" width="1" height="1" fill="#ffffff"/><rect x="5" y="6" width="1" height="1" fill="#ffffff"/><rect x="6" y="6" width="1" height="1" fill="#ffffff"/><rect x="7" y="6" width="1" height="1" fill="#ffffff"/><rect x="8" y="6" width="1" height="1" fill="#ffffff"/><rect x="9" y="6" width="1" height="1" fill="#ffffff"/><rect x="10" y="6" width="1" height="1" fill="#d4d0c8"/><rect x="11" y="6" width="1" height="1" fill="#ffffff"/><rect x="0" y="7" width="1" height="1" fill="#808080"/><rect x="1" y="7" width="1" height="1" fill="#404040"/><rect x="2" y="7" width="1" height="1" fill="#ffffff"/><rect x="3" y="7" width="1" height="1" fill="#ffffff"/><rect x="4" y="7" width="1" height="1" fill="#ffffff"/><rect x="5" y="7" width="1" height="1" fill="#ffffff"/><rect x="6" y="7" width="1" height="1" fill="#ffffff"/><rect x="7" y="7" width="1" height="1" fill="#ffffff"/><rect x="8" y="7" width="1" height="1" fill="#ffffff"/><rect x="9" y="7" width="1" height="1" fill="#ffffff"/><rect x="10" y="7" width="1" height="1" fill="#d4d0c8"/><rect x="11" y="7" width="1" height="1" fill="#ffffff"/><rect x="1" y="8" width="1" height="1" fill="#808080"/><rect x="2" y="8" width="1" height="1" fill="#404040"/><rect x="3" y="8" width="1" height="1" fill="#ffffff"/><rect x="4" y="8" width="1" height="1" fill="#ffffff"/><rect x="5" y="8" width="1" height="1" fill="#ffffff"/><rect x="6" y="8" width="1" height="1" fill="#ffffff"/><rect x="7" y="8" width="1" height="1" fill="#ffffff"/><rect x="8" y="8" width="1" height="1" fill="#ffffff"/><rect x="9" y="8" width="1" height="1" fill="#d4d0c8"/><rect x="10" y="8" width="1" height="1" fill="#ffffff"/><rect x="1" y="9" width="1" height="1" fill="#ffffff"/><rect x="2" y="9" width="1" height="1" fill="#d4d0c8"/><rect x="3" y="9" width="1" height="1" fill="#d4d0c8"/><rect x="4" y="9" width="1" height="1" fill="#ffffff"/><rect x="5" y="9" width="1" height="1" fill="#ffffff"/><rect x="6" y="9" width="1" height="1" fill="#ffffff"/><rect x="7" y="9" width="1" height="1" fill="#ffffff"/><rect x="8" y="9" width="1" height="1" fill="#d4d0c8"/><rect x="9" y="9" width="1" height="1" fill="#d4d0c8"/><rect x="10" y="9" width="1" height="1" fill="#ffffff"/><rect x="2" y="10" width="1" height="1" fill="#ffffff"/><rect x="3" y="10" width="1" height="1" fill="#ffffff"/><rect x="4" y="10" width="1" height="1" fill="#d4d0c8"/><rect x="5" y="10" width="1" height="1" fill="#d4d0c8"/><rect x="6" y="10" width="1" height="1" fill="#d4d0c8"/><rect x="7" y="10" width="1" height="1" fill="#d4d0c8"/><rect x="8" y="10" width="1" height="1" fill="#ffffff"/><rect x="9" y="10" width="1" height="1" fill="#ffffff"/><rect x="4" y="11" width="1" height="1" fill="#ffffff"/><rect x="5" y="11" width="1" height="1" fill="#ffffff"/><rect x="6" y="11" width="1" height="1" fill="#ffffff"/><rect x="7" y="11" width="1" height="1" fill="#ffffff"/><path d="M5 4h2v1h1v2h-1v1h-2v-1h-1v-2h1z" fill="#000"/></svg>
<div class="t" style="left:359.00px;top:206px;font-size:11px;color:#000;transform:scaleX(0.9298);transform-origin:0 0;">dB (V, SPL)</div>
<svg style="position:absolute;left:423px;top:209px" width="12" height="12" shape-rendering="crispEdges"><rect x="4" y="0" width="1" height="1" fill="#808080"/><rect x="5" y="0" width="1" height="1" fill="#808080"/><rect x="6" y="0" width="1" height="1" fill="#808080"/><rect x="7" y="0" width="1" height="1" fill="#808080"/><rect x="2" y="1" width="1" height="1" fill="#808080"/><rect x="3" y="1" width="1" height="1" fill="#808080"/><rect x="4" y="1" width="1" height="1" fill="#404040"/><rect x="5" y="1" width="1" height="1" fill="#404040"/><rect x="6" y="1" width="1" height="1" fill="#404040"/><rect x="7" y="1" width="1" height="1" fill="#404040"/><rect x="8" y="1" width="1" height="1" fill="#808080"/><rect x="9" y="1" width="1" height="1" fill="#808080"/><rect x="1" y="2" width="1" height="1" fill="#808080"/><rect x="2" y="2" width="1" height="1" fill="#404040"/><rect x="3" y="2" width="1" height="1" fill="#404040"/><rect x="4" y="2" width="1" height="1" fill="#ffffff"/><rect x="5" y="2" width="1" height="1" fill="#ffffff"/><rect x="6" y="2" width="1" height="1" fill="#ffffff"/><rect x="7" y="2" width="1" height="1" fill="#ffffff"/><rect x="8" y="2" width="1" height="1" fill="#ffffff"/><rect x="9" y="2" width="1" height="1" fill="#404040"/><rect x="10" y="2" width="1" height="1" fill="#ffffff"/><rect x="1" y="3" width="1" height="1" fill="#808080"/><rect x="2" y="3" width="1" height="1" fill="#404040"/><rect x="3" y="3" width="1" height="1" fill="#ffffff"/><rect x="4" y="3" width="1" height="1" fill="#ffffff"/><rect x="5" y="3" width="1" height="1" fill="#ffffff"/><rect x="6" y="3" width="1" height="1" fill="#ffffff"/><rect x="7" y="3" width="1" height="1" fill="#ffffff"/><rect x="8" y="3" width="1" height="1" fill="#ffffff"/><rect x="9" y="3" width="1" height="1" fill="#d4d0c8"/><rect x="10" y="3" width="1" height="1" fill="#ffffff"/><rect x="0" y="4" width="1" height="1" fill="#808080"/><rect x="1" y="4" width="1" height="1" fill="#404040"/><rect x="2" y="4" width="1" height="1" fill="#ffffff"/><rect x="3" y="4" width="1" height="1" fill="#ffffff"/><rect x="4" y="4" width="1" height="1" fill="#ffffff"/><rect x="5" y="4" width="1" height="1" fill="#ffffff"/><rect x="6" y="4" width="1" height="1" fill="#ffffff"/><rect x="7" y="4" width="1" height="1" fill="#ffffff"/><rect x="8" y="4" width="1" height="1" fill="#ffffff"/><rect x="9" y="4" width="1" height="1" fill="#ffffff"/><rect x="10" y="4" width="1" height="1" fill="#d4d0c8"/><rect x="11" y="4" width="1" height="1" fill="#ffffff"/><rect x="0" y="5" width="1" height="1" fill="#808080"/><rect x="1" y="5" width="1" height="1" fill="#404040"/><rect x="2" y="5" width="1" height="1" fill="#ffffff"/><rect x="3" y="5" width="1" height="1" fill="#ffffff"/><rect x="4" y="5" width="1" height="1" fill="#ffffff"/><rect x="5" y="5" width="1" height="1" fill="#ffffff"/><rect x="6" y="5" width="1" height="1" fill="#ffffff"/><rect x="7" y="5" width="1" height="1" fill="#ffffff"/><rect x="8" y="5" width="1" height="1" fill="#ffffff"/><rect x="9" y="5" width="1" height="1" fill="#ffffff"/><rect x="10" y="5" width="1" height="1" fill="#d4d0c8"/><rect x="11" y="5" width="1" height="1" fill="#ffffff"/><rect x="0" y="6" width="1" height="1" fill="#808080"/><rect x="1" y="6" width="1" height="1" fill="#404040"/><rect x="2" y="6" width="1" height="1" fill="#ffffff"/><rect x="3" y="6" width="1" height="1" fill="#ffffff"/><rect x="4" y="6" width="1" height="1" fill="#ffffff"/><rect x="5" y="6" width="1" height="1" fill="#ffffff"/><rect x="6" y="6" width="1" height="1" fill="#ffffff"/><rect x="7" y="6" width="1" height="1" fill="#ffffff"/><rect x="8" y="6" width="1" height="1" fill="#ffffff"/><rect x="9" y="6" width="1" height="1" fill="#ffffff"/><rect x="10" y="6" width="1" height="1" fill="#d4d0c8"/><rect x="11" y="6" width="1" height="1" fill="#ffffff"/><rect x="0" y="7" width="1" height="1" fill="#808080"/><rect x="1" y="7" width="1" height="1" fill="#404040"/><rect x="2" y="7" width="1" height="1" fill="#ffffff"/><rect x="3" y="7" width="1" height="1" fill="#ffffff"/><rect x="4" y="7" width="1" height="1" fill="#ffffff"/><rect x="5" y="7" width="1" height="1" fill="#ffffff"/><rect x="6" y="7" width="1" height="1" fill="#ffffff"/><rect x="7" y="7" width="1" height="1" fill="#ffffff"/><rect x="8" y="7" width="1" height="1" fill="#ffffff"/><rect x="9" y="7" width="1" height="1" fill="#ffffff"/><rect x="10" y="7" width="1" height="1" fill="#d4d0c8"/><rect x="11" y="7" width="1" height="1" fill="#ffffff"/><rect x="1" y="8" width="1" height="1" fill="#808080"/><rect x="2" y="8" width="1" height="1" fill="#404040"/><rect x="3" y="8" width="1" height="1" fill="#ffffff"/><rect x="4" y="8" width="1" height="1" fill="#ffffff"/><rect x="5" y="8" width="1" height="1" fill="#ffffff"/><rect x="6" y="8" width="1" height="1" fill="#ffffff"/><rect x="7" y="8" width="1" height="1" fill="#ffffff"/><rect x="8" y="8" width="1" height="1" fill="#ffffff"/><rect x="9" y="8" width="1" height="1" fill="#d4d0c8"/><rect x="10" y="8" width="1" height="1" fill="#ffffff"/><rect x="1" y="9" width="1" height="1" fill="#ffffff"/><rect x="2" y="9" width="1" height="1" fill="#d4d0c8"/><rect x="3" y="9" width="1" height="1" fill="#d4d0c8"/><rect x="4" y="9" width="1" height="1" fill="#ffffff"/><rect x="5" y="9" width="1" height="1" fill="#ffffff"/><rect x="6" y="9" width="1" height="1" fill="#ffffff"/><rect x="7" y="9" width="1" height="1" fill="#ffffff"/><rect x="8" y="9" width="1" height="1" fill="#d4d0c8"/><rect x="9" y="9" width="1" height="1" fill="#d4d0c8"/><rect x="10" y="9" width="1" height="1" fill="#ffffff"/><rect x="2" y="10" width="1" height="1" fill="#ffffff"/><rect x="3" y="10" width="1" height="1" fill="#ffffff"/><rect x="4" y="10" width="1" height="1" fill="#d4d0c8"/><rect x="5" y="10" width="1" height="1" fill="#d4d0c8"/><rect x="6" y="10" width="1" height="1" fill="#d4d0c8"/><rect x="7" y="10" width="1" height="1" fill="#d4d0c8"/><rect x="8" y="10" width="1" height="1" fill="#ffffff"/><rect x="9" y="10" width="1" height="1" fill="#ffffff"/><rect x="4" y="11" width="1" height="1" fill="#ffffff"/><rect x="5" y="11" width="1" height="1" fill="#ffffff"/><rect x="6" y="11" width="1" height="1" fill="#ffffff"/><rect x="7" y="11" width="1" height="1" fill="#ffffff"/></svg>
<div class="t" style="left:438.10px;top:206px;font-size:11px;color:#000;transform:scaleX(0.9048);transform-origin:0 0;">PSD</div>
<div class="t" style="left:285.00px;top:236px;font-size:11px;color:#000;transform:scaleX(0.9841);transform-origin:0 0;">Voltage units</div>
<div style="left:375px;top:235px;width:89px;height:21px;background:#ffffff;"></div>
<div style="left:375px;top:235px;width:88px;height:20px;background:#808080;"></div>
<div style="left:376px;top:236px;width:87px;height:19px;background:#d4d0c8;"></div>
<div style="left:376px;top:236px;width:86px;height:18px;background:#404040;"></div>
<div style="left:377px;top:237px;width:85px;height:17px;background:#ffffff;"></div>
<div style="left:446px;top:237px;width:16px;height:17px;background:#404040;"></div>
<div style="left:446px;top:237px;width:15px;height:16px;background:#d4d0c8;"></div>
<div style="left:447px;top:238px;width:14px;height:15px;background:#808080;"></div>
<div style="left:447px;top:238px;width:13px;height:14px;background:#ffffff;"></div>
<div style="left:448px;top:239px;width:12px;height:13px;background:#d4d0c8;"></div>
<div style="left:450px;top:243px;width:7px;height:1px;background:#000;"></div>
<div style="left:451px;top:244px;width:5px;height:1px;background:#000;"></div>
<div style="left:452px;top:245px;width:3px;height:1px;background:#000;"></div>
<div style="left:453px;top:246px;width:1px;height:1px;background:#000;"></div>
<div class="t" style="left:379.00px;top:236px;font-size:11px;color:#000;transform:scaleX(0.9048);transform-origin:0 0;">dBV</div>
<div class="t" style="left:284.01px;top:265px;font-size:11px;color:#000;transform:scaleX(0.9855);transform-origin:0 0;">Pressure units</div>
<div style="left:375px;top:265px;width:89px;height:21px;background:#ffffff;"></div>
<div style="left:375px;top:265px;width:88px;height:20px;background:#808080;"></div>
<div style="left:376px;top:266px;width:87px;height:19px;background:#d4d0c8;"></div>
<div style="left:376px;top:266px;width:86px;height:18px;background:#404040;"></div>
<div style="left:377px;top:267px;width:85px;height:17px;background:#ffffff;"></div>
<div style="left:446px;top:267px;width:16px;height:17px;background:#404040;"></div>
<div style="left:446px;top:267px;width:15px;height:16px;background:#d4d0c8;"></div>
<div style="left:447px;top:268px;width:14px;height:15px;background:#808080;"></div>
<div style="left:447px;top:268px;width:13px;height:14px;background:#ffffff;"></div>
<div style="left:448px;top:269px;width:12px;height:13px;background:#d4d0c8;"></div>
<div style="left:450px;top:273px;width:7px;height:1px;background:#000;"></div>
<div style="left:451px;top:274px;width:5px;height:1px;background:#000;"></div>
<div style="left:452px;top:275px;width:3px;height:1px;background:#000;"></div>
<div style="left:453px;top:276px;width:1px;height:1px;background:#000;"></div>
<div class="t" style="left:379.00px;top:266px;font-size:11px;color:#000;transform:scaleX(0.9531);transform-origin:0 0;">dB re 20 uPa</div>
<div class="t" style="left:506.00px;top:216px;font-size:11px;color:#000;transform:scaleX(1.0000);transform-origin:0 0;">Weighting</div>
<div style="left:564px;top:214px;width:60px;height:21px;background:#ffffff;"></div>
<div style="left:564px;top:214px;width:59px;height:20px;background:#808080;"></div>
<div style="left:565px;top:215px;width:58px;height:19px;background:#d4d0c8;"></div>
<div style="left:565px;top:215px;width:57px;height:18px;background:#404040;"></div>
<div style="left:566px;top:216px;width:56px;height:17px;background:#ffffff;"></div>
<div style="left:606px;top:216px;width:16px;height:17px;background:#404040;"></div>
<div style="left:606px;top:216px;width:15px;height:16px;background:#d4d0c8;"></div>
<div style="left:607px;top:217px;width:14px;height:15px;background:#808080;"></div>
<div style="left:607px;top:217px;width:13px;height:14px;background:#ffffff;"></div>
<div style="left:608px;top:218px;width:12px;height:13px;background:#d4d0c8;"></div>
<div style="left:610px;top:222px;width:7px;height:1px;background:#000;"></div>
<div style="left:611px;top:223px;width:5px;height:1px;background:#000;"></div>
<div style="left:612px;top:224px;width:3px;height:1px;background:#000;"></div>
<div style="left:613px;top:225px;width:1px;height:1px;background:#000;"></div>
<div class="t" style="left:567.00px;top:215px;font-size:11px;color:#000;transform:scaleX(1.0000);transform-origin:0 0;">None</div>
<div class="t" style="left:508.06px;top:258px;font-size:11px;color:#000;transform:scaleX(0.9398);transform-origin:0 0;">Show RMS Level</div>
<div style="left:601px;top:261px;width:13px;height:13px;background:#ffffff;"></div>
<div style="left:601px;top:261px;width:12px;height:12px;background:#808080;"></div>
<div style="left:602px;top:262px;width:11px;height:11px;background:#d4d0c8;"></div>
<div style="left:602px;top:262px;width:10px;height:10px;background:#404040;"></div>
<div style="left:603px;top:263px;width:9px;height:9px;background:#ffffff;"></div>
<svg style="position:absolute;left:604px;top:264px" width="7" height="7" shape-rendering="crispEdges"><path d="M6 0h1v3h-1v1h-1v1h-1v1h-1v1h-1v-1h-1v-1h-1v-3h1v1h1v1h1v-1h1v-1h1v-1h1z" fill="#000"/></svg>
<div style="left:299px;top:331px;width:13px;height:13px;background:#ffffff;"></div>
<div style="left:299px;top:331px;width:12px;height:12px;background:#808080;"></div>
<div style="left:300px;top:332px;width:11px;height:11px;background:#d4d0c8;"></div>
<div style="left:300px;top:332px;width:10px;height:10px;background:#404040;"></div>
<div style="left:301px;top:333px;width:9px;height:9px;background:#ffffff;"></div>
<svg style="position:absolute;left:302px;top:334px" width="7" height="7" shape-rendering="crispEdges"><path d="M6 0h1v3h-1v1h-1v1h-1v1h-1v1h-1v-1h-1v-1h-1v-3h1v1h1v1h1v-1h1v-1h1v-1h1z" fill="#000"/></svg>
<div class="t" style="left:317.00px;top:328px;font-size:11px;color:#000;transform:scaleX(0.9091);transform-origin:0 0;">THD</div>
<div style="left:299px;top:357px;width:13px;height:13px;background:#ffffff;"></div>
<div style="left:299px;top:357px;width:12px;height:12px;background:#808080;"></div>
<div style="left:300px;top:358px;width:11px;height:11px;background:#d4d0c8;"></div>
<div style="left:300px;top:358px;width:10px;height:10px;background:#404040;"></div>
<div style="left:301px;top:359px;width:9px;height:9px;background:#ffffff;"></div>
<svg style="position:absolute;left:302px;top:360px" width="7" height="7" shape-rendering="crispEdges"><path d="M6 0h1v3h-1v1h-1v1h-1v1h-1v1h-1v-1h-1v-1h-1v-3h1v1h1v1h1v-1h1v-1h1v-1h1z" fill="#000"/></svg>
<div class="t" style="left:317.00px;top:354px;font-size:11px;color:#000;transform:scaleX(0.9744);transform-origin:0 0;">THD+ N</div>
<div style="left:299px;top:383px;width:13px;height:13px;background:#ffffff;"></div>
<div style="left:299px;top:383px;width:12px;height:12px;background:#808080;"></div>
<div style="left:300px;top:384px;width:11px;height:11px;background:#d4d0c8;"></div>
<div style="left:300px;top:384px;width:10px;height:10px;background:#404040;"></div>
<div style="left:301px;top:385px;width:9px;height:9px;background:#ffffff;"></div>
<svg style="position:absolute;left:302px;top:386px" width="7" height="7" shape-rendering="crispEdges"><path d="M6 0h1v3h-1v1h-1v1h-1v1h-1v1h-1v-1h-1v-1h-1v-3h1v1h1v1h1v-1h1v-1h1v-1h1z" fill="#000"/></svg>
<div class="t" style="left:316.00px;top:380px;font-size:11px;color:#000;transform:scaleX(1.0000);transform-origin:0 0;">IMD</div>
<div style="left:299px;top:409px;width:13px;height:13px;background:#ffffff;"></div>
<div style="left:299px;top:409px;width:12px;height:12px;background:#808080;"></div>
<div style="left:300px;top:410px;width:11px;height:11px;background:#d4d0c8;"></div>
<div style="left:300px;top:410px;width:10px;height:10px;background:#404040;"></div>
<div style="left:301px;top:411px;width:9px;height:9px;background:#ffffff;"></div>
<div class="t" style="left:316.01px;top:406px;font-size:11px;color:#000;transform:scaleX(0.9867);transform-origin:0 0;">Multitone TD+N</div>
<div class="t" style="left:403.02px;top:328px;font-size:11px;color:#000;transform:scaleX(0.9752);transform-origin:0 0;">Normalize with full power</div>
<div style="left:529px;top:331px;width:13px;height:13px;background:#ffffff;"></div>
<div style="left:529px;top:331px;width:12px;height:12px;background:#808080;"></div>
<div style="left:530px;top:332px;width:11px;height:11px;background:#d4d0c8;"></div>
<div style="left:530px;top:332px;width:10px;height:10px;background:#404040;"></div>
<div style="left:531px;top:333px;width:9px;height:9px;background:#ffffff;"></div>
<svg style="position:absolute;left:532px;top:334px" width="7" height="7" shape-rendering="crispEdges"><path d="M6 0h1v3h-1v1h-1v1h-1v1h-1v1h-1v-1h-1v-1h-1v-3h1v1h1v1h1v-1h1v-1h1v-1h1z" fill="#000"/></svg>
<div class="t" style="left:405.98px;top:353px;font-size:11px;color:#000;transform:scaleX(1.0189);transform-origin:0 0;">Low cut-off</div>
<div style="left:489px;top:352px;width:54px;height:21px;background:#ffffff;"></div>
<div style="left:489px;top:352px;width:53px;height:20px;background:#808080;"></div>
<div style="left:490px;top:353px;width:52px;height:19px;background:#d4d0c8;"></div>
<div style="left:490px;top:353px;width:51px;height:18px;background:#404040;"></div>
<div style="left:491px;top:354px;width:50px;height:17px;background:#ffffff;"></div>
<div style="left:525px;top:354px;width:16px;height:17px;background:#404040;"></div>
<div style="left:525px;top:354px;width:15px;height:16px;background:#d4d0c8;"></div>
<div style="left:526px;top:355px;width:14px;height:15px;background:#808080;"></div>
<div style="left:526px;top:355px;width:13px;height:14px;background:#ffffff;"></div>
<div style="left:527px;top:356px;width:12px;height:13px;background:#d4d0c8;"></div>
<div style="left:529px;top:360px;width:7px;height:1px;background:#000;"></div>
<div style="left:530px;top:361px;width:5px;height:1px;background:#000;"></div>
<div style="left:531px;top:362px;width:3px;height:1px;background:#000;"></div>
<div style="left:532px;top:363px;width:1px;height:1px;background:#000;"></div>
<div class="t" style="left:491.94px;top:353px;font-size:11px;color:#000;transform:scaleX(1.0588);transform-origin:0 0;">100</div>
<div class="t" style="left:413.00px;top:380px;font-size:11px;color:#000;transform:scaleX(0.9909);transform-origin:0 0;">2nd and 3rd order IMD</div>
<div style="left:529px;top:383px;width:13px;height:13px;background:#ffffff;"></div>
<div style="left:529px;top:383px;width:12px;height:12px;background:#808080;"></div>
<div style="left:530px;top:384px;width:11px;height:11px;background:#d4d0c8;"></div>
<div style="left:530px;top:384px;width:10px;height:10px;background:#404040;"></div>
<div style="left:531px;top:385px;width:9px;height:9px;background:#ffffff;"></div>
<svg style="position:absolute;left:532px;top:386px" width="7" height="7" shape-rendering="crispEdges"><path d="M6 0h1v3h-1v1h-1v1h-1v1h-1v1h-1v-1h-1v-1h-1v-3h1v1h1v1h1v-1h1v-1h1v-1h1z" fill="#000"/></svg>
<div class="t" style="left:421.00px;top:406px;font-size:11px;color:#000;transform:scaleX(1.0000);transform-origin:0 0;">Frequency weighting</div>
<div style="left:529px;top:409px;width:13px;height:13px;background:#ffffff;"></div>
<div style="left:529px;top:409px;width:12px;height:12px;background:#808080;"></div>
<div style="left:530px;top:410px;width:11px;height:11px;background:#d4d0c8;"></div>
<div style="left:530px;top:410px;width:10px;height:10px;background:#404040;"></div>
<div style="left:531px;top:411px;width:9px;height:9px;background:#ffffff;"></div>
<div style="left:573px;top:317px;width:66px;height:23px;background:#404040;"></div>
<div style="left:573px;top:317px;width:65px;height:22px;background:#ffffff;"></div>
<div style="left:574px;top:318px;width:64px;height:21px;background:#808080;"></div>
<div style="left:574px;top:318px;width:63px;height:20px;background:#d4d0c8;"></div>
<div style="left:575px;top:319px;width:62px;height:19px;background:#d4d0c8;"></div>
<div class="t" style="left:585.94px;top:318px;font-size:11px;color:#000;transform:scaleX(1.0588);transform-origin:0 0;">Default</div>
<div style="left:573px;top:346px;width:66px;height:23px;background:#404040;"></div>
<div style="left:573px;top:346px;width:65px;height:22px;background:#ffffff;"></div>
<div style="left:574px;top:347px;width:64px;height:21px;background:#808080;"></div>
<div style="left:574px;top:347px;width:63px;height:20px;background:#d4d0c8;"></div>
<div style="left:575px;top:348px;width:62px;height:19px;background:#d4d0c8;"></div>
<div class="t" style="left:586.97px;top:347px;font-size:11px;color:#000;transform:scaleX(1.0294);transform-origin:0 0;">Update</div>
<div style="left:573px;top:411px;width:66px;height:23px;background:#404040;"></div>
<div style="left:573px;top:411px;width:65px;height:22px;background:#ffffff;"></div>
<div style="left:574px;top:412px;width:64px;height:21px;background:#808080;"></div>
<div style="left:574px;top:412px;width:63px;height:20px;background:#d4d0c8;"></div>
<div style="left:575px;top:413px;width:62px;height:19px;background:#d4d0c8;"></div>
<div class="t" style="left:599.00px;top:412px;font-size:11px;color:#000;transform:scaleX(0.8750);transform-origin:0 0;">OK</div>
<div style="left:573px;top:375px;width:66px;height:23px;background:#000;"></div>
<div style="left:574px;top:376px;width:64px;height:21px;background:#404040;"></div>
<div style="left:574px;top:376px;width:63px;height:20px;background:#ffffff;"></div>
<div style="left:575px;top:377px;width:62px;height:19px;background:#808080;"></div>
<div style="left:575px;top:377px;width:61px;height:18px;background:#d4d0c8;"></div>
<div style="left:577px;top:379px;width:58px;height:15px;box-sizing:border-box;border:1px dotted #000"></div>
<div class="t" style="left:589.03px;top:376px;font-size:11px;color:#000;transform:scaleX(0.9697);transform-origin:0 0;">Cancel</div>
</body></html>
